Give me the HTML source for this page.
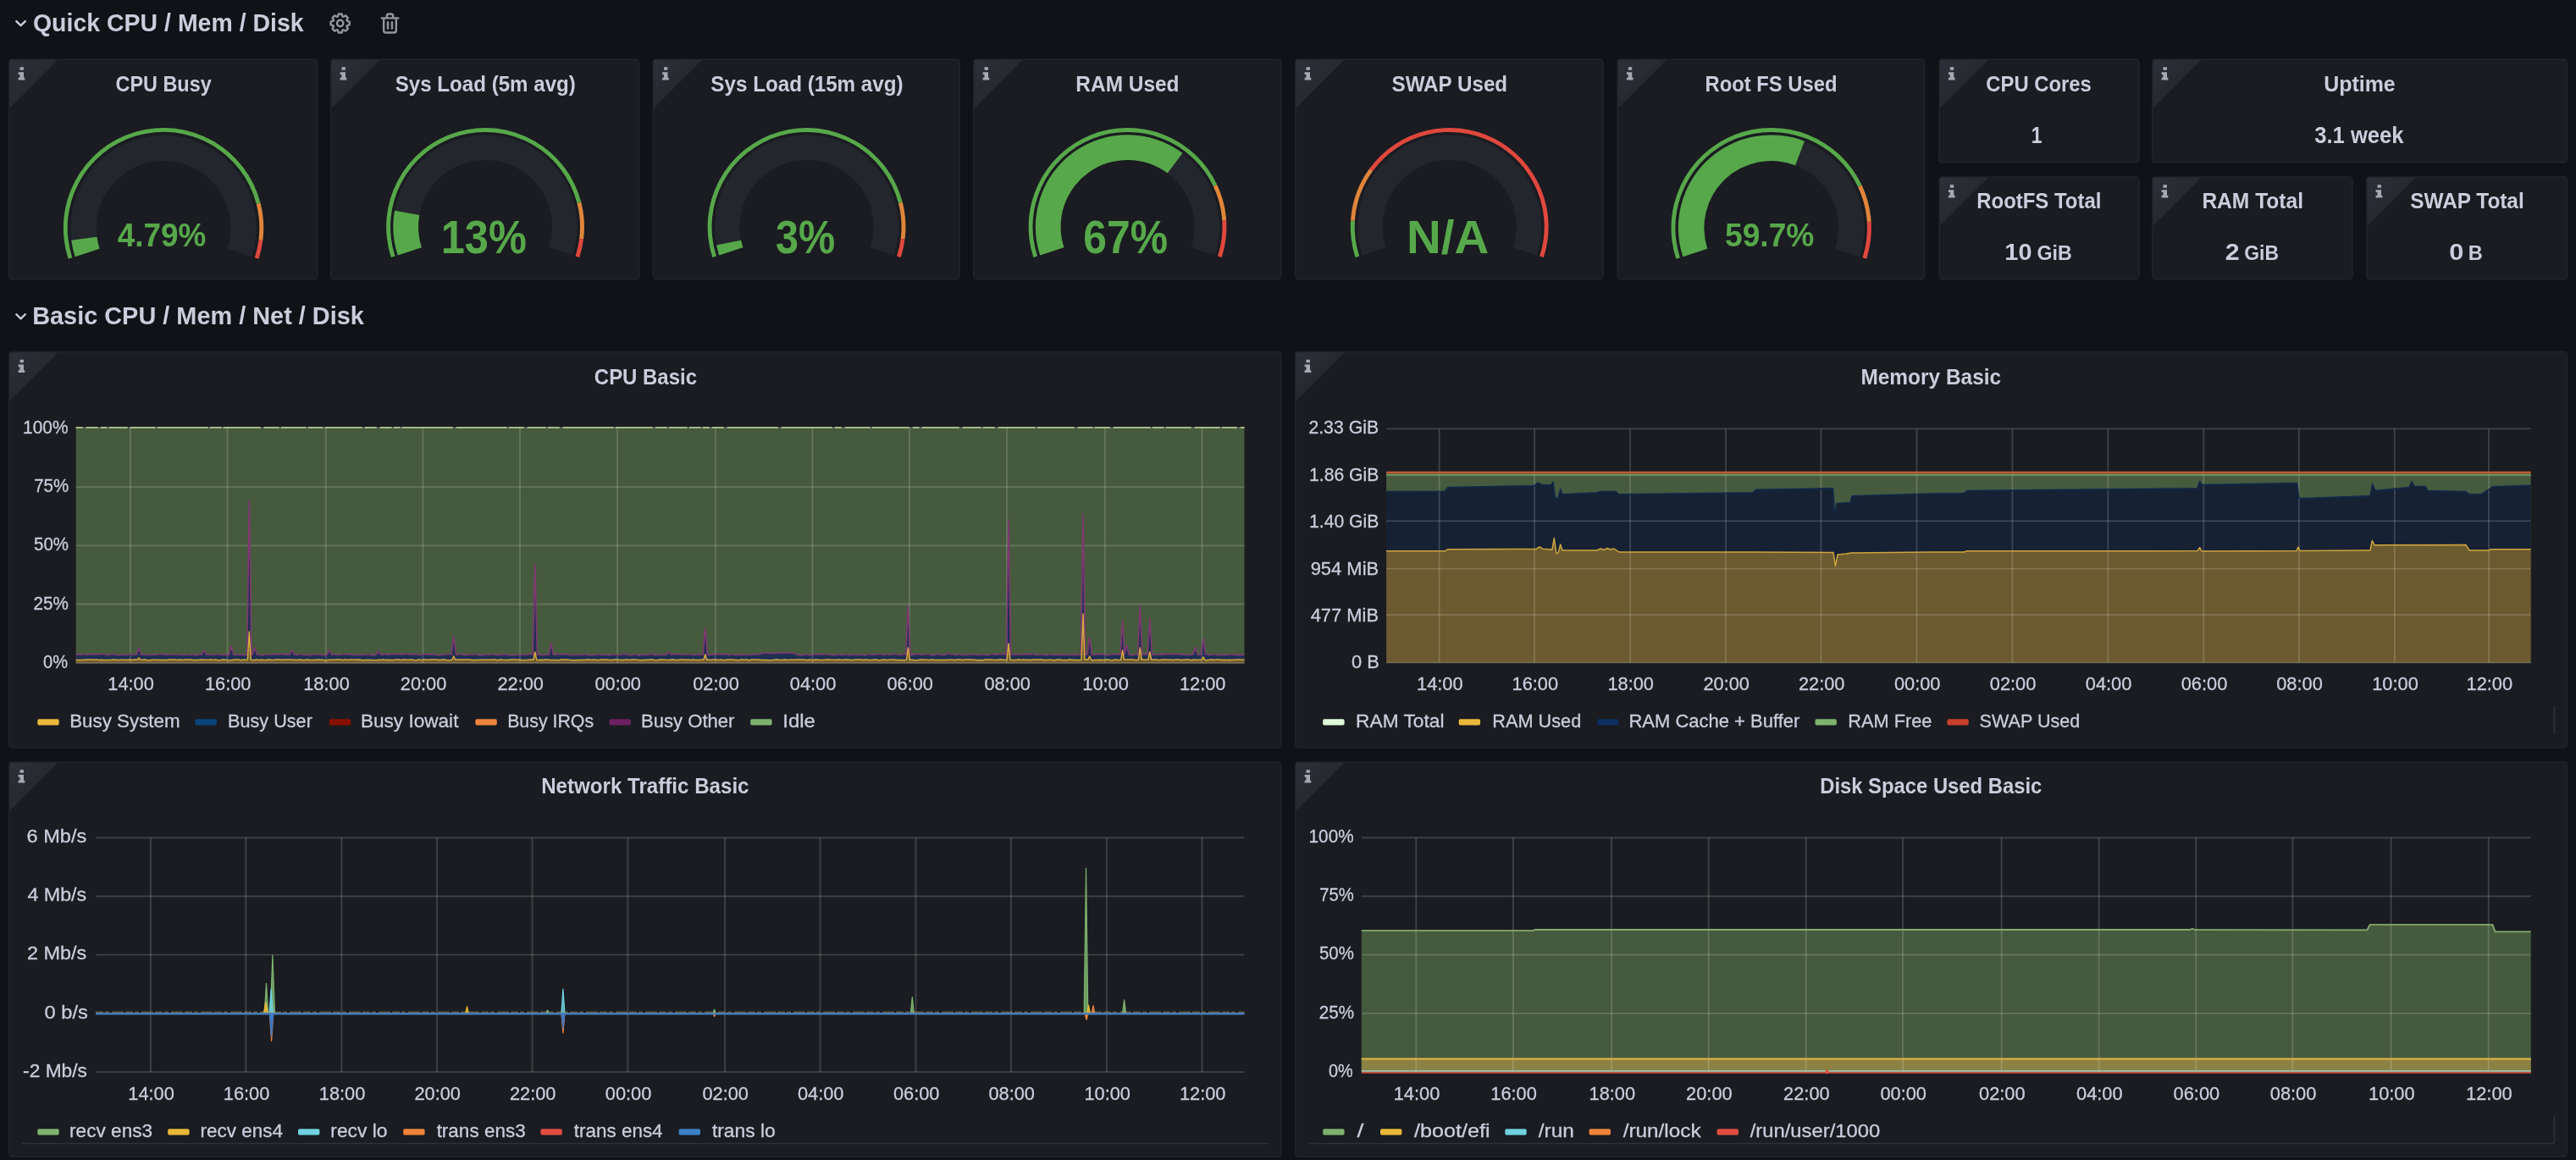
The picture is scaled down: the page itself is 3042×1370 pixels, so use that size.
<!DOCTYPE html>
<html><head><meta charset="utf-8"><title>Node Exporter Full</title>
<style>html,body{margin:0;padding:0;background:#111217;}body{width:3042px;height:1370px;overflow:hidden;font-family:"Liberation Sans",sans-serif;}svg{display:block}text{white-space:pre}</style>
</head><body>
<svg width="3042" height="1370" viewBox="0 0 3042 1370" font-family="Liberation Sans, sans-serif" style="will-change:transform">
<defs><linearGradient id="cg" x1="0" y1="0" x2="1" y2="1"><stop offset="0" stop-color="#2c3038"/><stop offset="0.5" stop-color="#262930"/></linearGradient></defs>
<rect width="3042" height="1370" fill="#111217"/>
<g transform="translate(9.9 13.0) scale(1.22)" fill="#ccccdc"><path d="M17,9.17a1,1,0,0,0-1.41,0L12,12.71,8.46,9.17a1,1,0,0,0-1.41,0,1,1,0,0,0,0,1.42l4.24,4.24a1,1,0,0,0,1.42,0L17,10.59A1,1,0,0,0,17,9.17Z"/></g>
<text x="38.91" y="37.0" font-size="30.2" font-weight="bold" textLength="319.81" lengthAdjust="spacingAndGlyphs" fill="#ccccdc">Quick CPU / Mem / Disk</text>
<g transform="translate(387 12.8) scale(1.225)" fill="#93949f"><path d="M21.32,9.55l-1.89-.63.89-1.78A1,1,0,0,0,20.13,6L18,3.87a1,1,0,0,0-1.15-.19l-1.78.89-.63-1.89A1,1,0,0,0,13.5,2h-3a1,1,0,0,0-.95.68L8.92,4.57,7.14,3.68A1,1,0,0,0,6,3.87L3.87,6a1,1,0,0,0-.19,1.15l.89,1.78-1.89.63A1,1,0,0,0,2,10.5v3a1,1,0,0,0,.68.95l1.89.63-.89,1.78A1,1,0,0,0,3.87,18L6,20.13a1,1,0,0,0,1.15.19l1.78-.89.63,1.89a1,1,0,0,0,.95.68h3a1,1,0,0,0,.95-.68l.63-1.89,1.78.89A1,1,0,0,0,18,20.13L20.13,18a1,1,0,0,0,.19-1.15l-.89-1.78,1.89-.63A1,1,0,0,0,22,13.5v-3A1,1,0,0,0,21.32,9.55ZM20,12.78l-1.2.4A2,2,0,0,0,17.64,16l.57,1.14-1.1,1.1L16,17.64a2,2,0,0,0-2.79,1.16l-.4,1.2H11.22l-.4-1.2A2,2,0,0,0,8,17.64l-1.14.57-1.1-1.1L6.36,16A2,2,0,0,0,5.2,13.18L4,12.78V11.22l1.2-.4A2,2,0,0,0,6.36,8L5.79,6.89l1.1-1.1L8,6.36A2,2,0,0,0,10.82,5.2l.4-1.2h1.56l.4,1.2A2,2,0,0,0,16,6.36l1.14-.57,1.1,1.1L17.64,8a2,2,0,0,0,1.16,2.79l1.2.4ZM12,8a4,4,0,1,0,4,4A4,4,0,0,0,12,8Zm0,6a2,2,0,1,1,2-2A2,2,0,0,1,12,14Z"/></g>
<g transform="translate(445.8 12.8) scale(1.225)" fill="#93949f"><path d="M10,18a1,1,0,0,0,1-1V11a1,1,0,0,0-2,0v6A1,1,0,0,0,10,18ZM20,6H16V5a3,3,0,0,0-3-3H11A3,3,0,0,0,8,5V6H4A1,1,0,0,0,4,8H5V19a3,3,0,0,0,3,3h8a3,3,0,0,0,3-3V8h1a1,1,0,0,0,0-2ZM10,5a1,1,0,0,1,1-1h2a1,1,0,0,1,1,1V6H10Zm7,14a1,1,0,0,1-1,1H8a1,1,0,0,1-1-1V8H17Zm-3-1a1,1,0,0,0,1-1V11a1,1,0,0,0-2,0v6A1,1,0,0,0,14,18Z"/></g>
<g transform="translate(9.9 359.2) scale(1.22)" fill="#ccccdc"><path d="M17,9.17a1,1,0,0,0-1.41,0L12,12.71,8.46,9.17a1,1,0,0,0-1.41,0,1,1,0,0,0,0,1.42l4.24,4.24a1,1,0,0,0,1.42,0L17,10.59A1,1,0,0,0,17,9.17Z"/></g>
<text x="38.16" y="382.6" font-size="30.2" font-weight="bold" textLength="391.70" lengthAdjust="spacingAndGlyphs" fill="#ccccdc">Basic CPU / Mem / Net / Disk</text>
<rect x="10.9" y="70.2" width="363.7" height="259.4" rx="3.6" fill="#1a1c21" stroke="#202227" stroke-width="1.8"/>
<path d="M11.5 70.8h57l-57 57z" fill="url(#cg)"/>
<path d="M23.5 79.3h4.4v3.5h-4.4zM21.6 85.2h6.4v6.6h1.3v2.7h-7.7v-2.7h1.8v-3.9h-1.8z" fill="#a6a8b2"/>
<text x="136.48" y="108.0" font-size="26.6" font-weight="bold" textLength="113.23" lengthAdjust="spacingAndGlyphs" fill="#ccccdc">CPU Busy</text>
<path d="M80.64 305.73A118.2 118.2 0 1 1 307.54 239.80L302.79 241.02A113.3 113.3 0 1 0 85.30 304.21Z" fill="#57a84a"/>
<path d="M307.54 239.80A118.2 118.2 0 0 1 310.32 284.01L305.46 283.40A113.3 113.3 0 0 0 302.79 241.02Z" fill="#e0853a"/>
<path d="M310.32 284.01A118.2 118.2 0 0 1 305.46 305.73L300.80 304.21A113.3 113.3 0 0 0 305.46 283.40Z" fill="#e0483e"/>
<path d="M88.62 303.13A109.8 109.8 0 1 1 297.48 303.13L268.47 293.71A79.3 79.3 0 1 0 117.63 293.71Z" fill="#23262c"/>
<path d="M88.62 303.13A109.8 109.8 0 0 1 84.23 283.82L114.46 279.76A79.3 79.3 0 0 0 117.63 293.71Z" fill="#57a84a"/>
<text x="138.72" y="290.7" font-size="39" font-weight="bold" textLength="104.76" lengthAdjust="spacingAndGlyphs" fill="#57a84a">4.79%</text>
<rect x="390.9" y="70.2" width="363.7" height="259.4" rx="3.6" fill="#1a1c21" stroke="#202227" stroke-width="1.8"/>
<path d="M391.5 70.8h57l-57 57z" fill="url(#cg)"/>
<path d="M403.5 79.3h4.4v3.5h-4.4zM401.6 85.2h6.4v6.6h1.3v2.7h-7.7v-2.7h1.8v-3.9h-1.8z" fill="#a6a8b2"/>
<text x="466.77" y="108.0" font-size="26.6" font-weight="bold" textLength="213.03" lengthAdjust="spacingAndGlyphs" fill="#ccccdc">Sys Load (5m avg)</text>
<path d="M461.87 304.02A116.9 116.9 0 1 1 686.28 238.83L681.53 240.05A112.0 112.0 0 1 0 466.53 302.51Z" fill="#57a84a"/>
<path d="M686.28 238.83A116.9 116.9 0 0 1 689.03 282.55L684.17 281.94A112.0 112.0 0 0 0 681.53 240.05Z" fill="#e0853a"/>
<path d="M689.03 282.55A116.9 116.9 0 0 1 684.23 304.02L679.57 302.51A112.0 112.0 0 0 0 684.17 281.94Z" fill="#e0483e"/>
<path d="M469.67 301.49A108.7 108.7 0 1 1 676.43 301.49L648.18 292.31A79.0 79.0 0 1 0 497.92 292.31Z" fill="#23262c"/>
<path d="M469.67 301.49A108.7 108.7 0 0 1 466.03 248.87L495.27 254.07A79.0 79.0 0 0 0 497.92 292.31Z" fill="#57a84a"/>
<text x="520.76" y="299.0" font-size="55" font-weight="bold" textLength="101.01" lengthAdjust="spacingAndGlyphs" fill="#57a84a">13%</text>
<rect x="771.4" y="70.2" width="361.7" height="259.4" rx="3.6" fill="#1a1c21" stroke="#202227" stroke-width="1.8"/>
<path d="M772.0 70.8h57l-57 57z" fill="url(#cg)"/>
<path d="M784.0 79.3h4.4v3.5h-4.4zM782.1 85.2h6.4v6.6h1.3v2.7h-7.7v-2.7h1.8v-3.9h-1.8z" fill="#a6a8b2"/>
<text x="839.37" y="108.0" font-size="26.6" font-weight="bold" textLength="227.22" lengthAdjust="spacingAndGlyphs" fill="#ccccdc">Sys Load (15m avg)</text>
<path d="M841.37 304.02A116.9 116.9 0 1 1 1065.78 238.83L1061.03 240.05A112.0 112.0 0 1 0 846.03 302.51Z" fill="#57a84a"/>
<path d="M1065.78 238.83A116.9 116.9 0 0 1 1068.53 282.55L1063.67 281.94A112.0 112.0 0 0 0 1061.03 240.05Z" fill="#e0853a"/>
<path d="M1068.53 282.55A116.9 116.9 0 0 1 1063.73 304.02L1059.07 302.51A112.0 112.0 0 0 0 1063.67 281.94Z" fill="#e0483e"/>
<path d="M849.17 301.49A108.7 108.7 0 1 1 1055.93 301.49L1027.68 292.31A79.0 79.0 0 1 0 877.42 292.31Z" fill="#23262c"/>
<path d="M849.17 301.49A108.7 108.7 0 0 1 846.04 289.61L875.14 283.68A79.0 79.0 0 0 0 877.42 292.31Z" fill="#57a84a"/>
<text x="915.96" y="298.7" font-size="55" font-weight="bold" textLength="70.08" lengthAdjust="spacingAndGlyphs" fill="#57a84a">3%</text>
<rect x="1149.9" y="70.2" width="362.7" height="259.4" rx="3.6" fill="#1a1c21" stroke="#202227" stroke-width="1.8"/>
<path d="M1150.5 70.8h57l-57 57z" fill="url(#cg)"/>
<path d="M1162.5 79.3h4.4v3.5h-4.4zM1160.6 85.2h6.4v6.6h1.3v2.7h-7.7v-2.7h1.8v-3.9h-1.8z" fill="#a6a8b2"/>
<text x="1270.37" y="108.0" font-size="26.6" font-weight="bold" textLength="122.16" lengthAdjust="spacingAndGlyphs" fill="#ccccdc">RAM Used</text>
<path d="M1220.37 304.02A116.9 116.9 0 0 1 1437.32 218.13L1432.89 220.21A112.0 112.0 0 0 0 1225.03 302.51Z" fill="#57a84a"/>
<path d="M1437.32 218.13A116.9 116.9 0 0 1 1448.22 260.56L1443.33 260.87A112.0 112.0 0 0 0 1432.89 220.21Z" fill="#e0853a"/>
<path d="M1448.22 260.56A116.9 116.9 0 0 1 1442.73 304.02L1438.07 302.51A112.0 112.0 0 0 0 1443.33 260.87Z" fill="#e0483e"/>
<path d="M1228.17 301.49A108.7 108.7 0 1 1 1434.93 301.49L1406.68 292.31A79.0 79.0 0 1 0 1256.42 292.31Z" fill="#23262c"/>
<path d="M1228.17 301.49A108.7 108.7 0 0 1 1396.54 180.77L1378.78 204.58A79.0 79.0 0 0 0 1256.42 292.31Z" fill="#57a84a"/>
<text x="1279.27" y="298.7" font-size="55" font-weight="bold" textLength="99.68" lengthAdjust="spacingAndGlyphs" fill="#57a84a">67%</text>
<rect x="1529.9" y="70.2" width="363.0" height="259.4" rx="3.6" fill="#1a1c21" stroke="#202227" stroke-width="1.8"/>
<path d="M1530.5 70.8h57l-57 57z" fill="url(#cg)"/>
<path d="M1542.5 79.3h4.4v3.5h-4.4zM1540.6 85.2h6.4v6.6h1.3v2.7h-7.7v-2.7h1.8v-3.9h-1.8z" fill="#a6a8b2"/>
<text x="1643.52" y="108.0" font-size="26.6" font-weight="bold" textLength="136.60" lengthAdjust="spacingAndGlyphs" fill="#ccccdc">SWAP Used</text>
<path d="M1600.52 304.02A116.9 116.9 0 0 1 1595.03 260.56L1599.92 260.87A112.0 112.0 0 0 0 1605.18 302.51Z" fill="#57a84a"/>
<path d="M1595.03 260.56A116.9 116.9 0 0 1 1617.13 199.19L1621.09 202.07A112.0 112.0 0 0 0 1599.92 260.87Z" fill="#e0853a"/>
<path d="M1617.13 199.19A116.9 116.9 0 0 1 1822.88 304.02L1818.22 302.51A112.0 112.0 0 0 0 1621.09 202.07Z" fill="#e0483e"/>
<path d="M1608.32 301.49A108.7 108.7 0 1 1 1815.08 301.49L1786.83 292.31A79.0 79.0 0 1 0 1636.57 292.31Z" fill="#23262c"/>
<text x="1661.00" y="299.0" font-size="55" font-weight="bold" textLength="97.26" lengthAdjust="spacingAndGlyphs" fill="#57a84a">N/A</text>
<rect x="1910.2" y="70.2" width="362.4" height="259.4" rx="3.6" fill="#1a1c21" stroke="#202227" stroke-width="1.8"/>
<path d="M1910.8 70.8h57l-57 57z" fill="url(#cg)"/>
<path d="M1922.8 79.3h4.4v3.5h-4.4zM1920.9 85.2h6.4v6.6h1.3v2.7h-7.7v-2.7h1.8v-3.9h-1.8z" fill="#a6a8b2"/>
<text x="2013.61" y="108.0" font-size="26.6" font-weight="bold" textLength="155.81" lengthAdjust="spacingAndGlyphs" fill="#ccccdc">Root FS Used</text>
<path d="M1979.29 305.73A118.2 118.2 0 0 1 2198.65 218.87L2194.22 220.96A113.3 113.3 0 0 0 1983.95 304.21Z" fill="#57a84a"/>
<path d="M2198.65 218.87A118.2 118.2 0 0 1 2209.67 261.78L2204.78 262.09A113.3 113.3 0 0 0 2194.22 220.96Z" fill="#e0853a"/>
<path d="M2209.67 261.78A118.2 118.2 0 0 1 2204.11 305.73L2199.45 304.21A113.3 113.3 0 0 0 2204.78 262.09Z" fill="#e0483e"/>
<path d="M1987.27 303.13A109.8 109.8 0 1 1 2196.13 303.13L2167.12 293.71A79.3 79.3 0 1 0 2016.28 293.71Z" fill="#23262c"/>
<path d="M1987.27 303.13A109.8 109.8 0 0 1 2130.96 166.66L2120.06 195.14A79.3 79.3 0 0 0 2016.28 293.71Z" fill="#57a84a"/>
<text x="2037.00" y="290.7" font-size="39" font-weight="bold" textLength="105.45" lengthAdjust="spacingAndGlyphs" fill="#57a84a">59.7%</text>
<rect x="2290.2" y="70.2" width="235.7" height="121.6" rx="3.6" fill="#1a1c21" stroke="#202227" stroke-width="1.8"/>
<path d="M2290.8 70.8h57l-57 57z" fill="url(#cg)"/>
<path d="M2302.8 79.3h4.4v3.5h-4.4zM2300.9 85.2h6.4v6.6h1.3v2.7h-7.7v-2.7h1.8v-3.9h-1.8z" fill="#a6a8b2"/>
<text x="2345.35" y="108.0" font-size="26.6" font-weight="bold" textLength="124.40" lengthAdjust="spacingAndGlyphs" fill="#ccccdc">CPU Cores</text>
<text x="2398.83" y="168.8" font-size="28.2" font-weight="bold" textLength="12.66" lengthAdjust="spacingAndGlyphs" fill="#ccccdc">1</text>
<rect x="2541.9" y="70.2" width="489.4" height="121.6" rx="3.6" fill="#1a1c21" stroke="#202227" stroke-width="1.8"/>
<path d="M2542.5 70.8h57l-57 57z" fill="url(#cg)"/>
<path d="M2554.5 79.3h4.4v3.5h-4.4zM2552.6 85.2h6.4v6.6h1.3v2.7h-7.7v-2.7h1.8v-3.9h-1.8z" fill="#a6a8b2"/>
<text x="2744.24" y="108.0" font-size="26.6" font-weight="bold" textLength="84.51" lengthAdjust="spacingAndGlyphs" fill="#ccccdc">Uptime</text>
<text x="2733.17" y="168.8" font-size="28.2" font-weight="bold" textLength="105.42" lengthAdjust="spacingAndGlyphs" fill="#ccccdc">3.1 week</text>
<rect x="2290.2" y="209.2" width="235.7" height="120.5" rx="3.6" fill="#1a1c21" stroke="#202227" stroke-width="1.8"/>
<path d="M2290.8 209.8h57l-57 57z" fill="url(#cg)"/>
<path d="M2302.8 218.3h4.4v3.5h-4.4zM2300.9 224.2h6.4v6.6h1.3v2.7h-7.7v-2.7h1.8v-3.9h-1.8z" fill="#a6a8b2"/>
<text x="2334.24" y="246.2" font-size="26.6" font-weight="bold" textLength="147.17" lengthAdjust="spacingAndGlyphs" fill="#ccccdc">RootFS Total</text>
<text x="2367.35" y="306.5" font-size="28.2" font-weight="bold" textLength="32.20" lengthAdjust="spacingAndGlyphs" fill="#ccccdc">10</text>
<text x="2405.45" y="306.5" font-size="24.6" font-weight="bold" textLength="41.23" lengthAdjust="spacingAndGlyphs" fill="#ccccdc">GiB</text>
<rect x="2541.9" y="209.2" width="235.9" height="120.5" rx="3.6" fill="#1a1c21" stroke="#202227" stroke-width="1.8"/>
<path d="M2542.5 209.8h57l-57 57z" fill="url(#cg)"/>
<path d="M2554.5 218.3h4.4v3.5h-4.4zM2552.6 224.2h6.4v6.6h1.3v2.7h-7.7v-2.7h1.8v-3.9h-1.8z" fill="#a6a8b2"/>
<text x="2600.39" y="246.2" font-size="26.6" font-weight="bold" textLength="119.60" lengthAdjust="spacingAndGlyphs" fill="#ccccdc">RAM Total</text>
<text x="2627.79" y="306.5" font-size="28.2" font-weight="bold" textLength="16.93" lengthAdjust="spacingAndGlyphs" fill="#ccccdc">2</text>
<text x="2650.26" y="306.5" font-size="24.6" font-weight="bold" textLength="40.74" lengthAdjust="spacingAndGlyphs" fill="#ccccdc">GiB</text>
<rect x="2794.9" y="209.2" width="236.4" height="120.5" rx="3.6" fill="#1a1c21" stroke="#202227" stroke-width="1.8"/>
<path d="M2795.5 209.8h57l-57 57z" fill="url(#cg)"/>
<path d="M2807.5 218.3h4.4v3.5h-4.4zM2805.6 224.2h6.4v6.6h1.3v2.7h-7.7v-2.7h1.8v-3.9h-1.8z" fill="#a6a8b2"/>
<text x="2846.25" y="246.2" font-size="26.6" font-weight="bold" textLength="134.44" lengthAdjust="spacingAndGlyphs" fill="#ccccdc">SWAP Total</text>
<text x="2892.27" y="306.5" font-size="28.2" font-weight="bold" textLength="17.16" lengthAdjust="spacingAndGlyphs" fill="#ccccdc">0</text>
<text x="2914.72" y="306.5" font-size="24.6" font-weight="bold" textLength="16.99" lengthAdjust="spacingAndGlyphs" fill="#ccccdc">B</text>
<rect x="10.9" y="415.6" width="1501.7" height="467.3" rx="3.6" fill="#1a1c21" stroke="#202227" stroke-width="1.8"/>
<path d="M11.5 416.2h57l-57 57z" fill="url(#cg)"/>
<path d="M23.5 424.7h4.4v3.5h-4.4zM21.6 430.6h6.4v6.6h1.3v2.7h-7.7v-2.7h1.8v-3.9h-1.8z" fill="#a6a8b2"/>
<text x="701.84" y="453.8" font-size="26.6" font-weight="bold" textLength="121.17" lengthAdjust="spacingAndGlyphs" fill="#ccccdc">CPU Basic</text>
<rect x="89.7" y="505" width="1379.8" height="278.2" fill="#465a3e"/>
<path d="M89.7 772.9L92.7 772.6L95.7 773.3L98.7 772.5L101.7 773.2L104.7 772.9L107.7 772.5L110.7 773.1L113.7 772.5L116.7 773.0L119.7 772.5L122.7 772.5L125.7 773.0L128.7 773.6L131.7 772.6L134.7 772.7L137.7 773.3L140.7 773.7L143.7 773.2L146.7 773.0L149.7 773.8L152.7 772.5L155.7 773.6L158.7 772.8L161.4 773.1L164.0 765.0L166.6 773.1L167.7 772.8L170.7 773.5L173.7 772.7L176.7 773.2L179.7 773.3L182.7 772.9L185.7 773.2L188.7 772.5L191.7 772.5L194.7 772.7L197.7 773.4L200.7 773.0L203.7 772.8L206.7 773.2L209.7 773.0L212.7 772.8L215.7 773.5L218.7 773.4L221.7 772.7L224.7 773.2L227.7 773.1L230.7 773.6L233.7 773.4L236.7 772.8L238.4 773.1L241.0 768.0L243.6 773.1L245.7 773.0L248.7 773.5L251.7 772.6L254.7 773.1L257.7 772.5L260.7 773.3L263.7 773.5L266.7 773.2L269.7 773.6L270.4 773.1L273.0 763.0L275.6 773.1L278.7 773.2L281.7 773.2L284.7 773.0L287.7 773.6L290.7 773.7L291.7 773.1L294.3 590.8L296.9 773.1L298.2 773.1L300.8 765.0L303.4 773.1L305.7 773.3L308.7 773.8L311.7 773.6L314.7 772.8L317.7 772.9L320.7 773.3L323.7 772.4L326.7 773.0L329.7 772.6L332.7 772.6L335.7 772.5L338.7 773.5L341.7 772.6L342.4 773.1L345.0 768.0L347.6 773.1L350.7 773.6L353.7 772.5L356.7 773.0L359.7 773.2L362.7 773.6L365.7 773.5L368.7 773.6L371.7 772.8L374.7 773.0L377.7 772.9L380.7 773.6L383.7 773.7L386.4 773.1L389.0 768.0L391.6 773.1L392.7 772.7L395.7 772.7L398.7 773.1L401.7 773.2L404.7 772.8L407.7 772.4L410.7 773.0L413.7 772.9L416.7 773.2L419.7 773.7L422.7 773.4L425.7 773.1L428.7 773.3L431.7 773.3L434.7 772.5L437.7 773.7L440.7 773.5L443.7 773.6L444.4 773.1L447.0 769.0L449.6 773.1L452.7 773.0L455.7 772.5L458.7 773.3L461.7 772.5L464.7 772.5L467.7 772.7L470.7 772.6L473.7 772.9L476.7 772.5L479.7 772.4L482.7 772.6L485.7 772.5L488.7 772.9L491.7 772.4L494.7 773.6L497.7 773.3L500.7 772.6L503.7 772.8L506.7 772.9L509.7 772.9L512.7 772.6L515.7 773.6L518.7 773.8L521.7 773.1L524.7 773.1L527.7 772.5L530.7 772.5L533.2 773.1L535.8 751.0L538.4 773.1L539.7 773.6L542.7 772.6L545.7 772.4L548.7 773.7L551.7 773.1L554.7 772.6L557.7 773.2L560.7 772.4L563.7 773.1L566.7 773.8L569.7 773.6L572.7 773.4L575.7 772.8L578.7 772.9L581.7 772.6L584.7 773.5L587.7 773.1L590.7 773.5L593.7 772.9L596.7 772.7L599.7 773.5L602.7 773.8L605.7 773.6L608.7 773.5L611.7 773.5L614.7 773.4L617.7 772.7L620.7 773.1L623.7 772.9L626.7 772.4L629.2 773.1L631.8 666.5L634.4 773.1L635.7 772.8L638.7 773.4L641.7 773.7L644.7 773.0L648.2 773.1L650.8 759.6L653.4 773.1L656.7 772.9L659.7 772.7L662.7 772.7L665.7 772.7L668.7 772.7L671.7 773.3L674.7 773.7L677.7 773.6L680.7 773.1L683.7 773.3L686.7 773.5L689.7 772.5L692.7 773.3L695.7 773.7L698.7 773.5L701.7 773.5L704.7 773.1L707.7 772.6L710.7 773.5L713.7 772.9L716.7 773.5L719.7 773.8L722.7 773.0L725.7 773.0L728.7 773.7L731.7 773.4L734.7 772.6L737.7 772.6L740.7 772.6L743.7 773.7L746.7 773.5L749.7 772.6L752.7 773.6L755.7 773.8L758.7 773.3L761.7 772.9L764.7 773.2L767.7 772.6L770.7 772.4L773.7 773.8L776.7 773.3L779.7 773.1L782.7 773.7L785.7 773.0L787.4 773.1L790.0 770.0L792.6 773.1L794.7 772.7L797.7 772.8L800.7 772.8L803.7 772.7L806.7 773.2L809.7 772.8L812.7 773.0L815.7 772.6L818.7 773.7L821.7 772.9L824.7 773.0L827.7 773.2L830.2 773.1L832.8 742.0L835.4 773.1L836.7 773.7L839.7 773.1L842.7 773.1L845.7 773.1L848.7 772.4L851.7 773.0L854.7 772.7L857.7 772.4L860.7 773.5L863.7 772.6L866.7 773.1L869.7 773.4L872.7 773.2L875.7 772.9L878.7 773.1L881.7 773.2L884.7 773.5L887.7 772.5L890.7 773.2L893.7 772.7L896.7 772.8L899.7 771.6L902.7 771.2L905.7 771.3L908.7 771.6L911.7 771.8L914.7 771.1L917.7 771.4L920.7 771.2L923.7 771.2L926.7 771.5L929.7 771.1L932.7 771.2L935.7 771.2L938.7 771.8L941.7 773.4L944.7 773.6L947.7 773.7L950.7 772.8L953.7 773.2L956.7 773.7L959.7 773.6L962.7 772.6L965.7 772.6L968.7 773.0L971.7 772.5L974.7 772.7L977.7 772.5L980.7 773.3L983.7 773.5L986.7 773.7L989.7 772.6L992.7 773.4L995.7 773.3L998.7 772.6L1001.7 773.6L1004.7 773.8L1007.7 772.7L1010.7 773.7L1013.7 773.0L1016.7 773.1L1019.7 773.8L1022.7 773.6L1025.7 772.6L1028.7 773.0L1031.7 773.1L1034.7 772.9L1037.7 772.7L1040.7 772.8L1043.7 773.4L1046.7 772.4L1049.7 773.2L1052.7 773.0L1055.7 772.4L1058.7 772.9L1061.7 773.3L1064.7 773.1L1067.7 772.5L1069.8 773.1L1072.4 716.0L1075.0 773.1L1076.7 773.8L1079.7 772.5L1082.7 772.8L1085.7 772.5L1088.7 773.5L1091.7 772.8L1094.7 772.6L1097.7 773.0L1100.7 773.7L1103.7 773.5L1106.7 772.8L1109.7 772.6L1112.7 773.7L1115.7 773.2L1117.4 773.1L1120.0 771.0L1122.6 773.1L1124.7 772.5L1127.7 773.4L1130.7 773.0L1133.7 772.5L1136.7 773.7L1139.7 773.3L1142.7 773.5L1145.7 772.5L1148.7 773.6L1151.7 772.5L1154.7 773.6L1157.7 773.0L1160.7 772.9L1163.7 773.2L1166.7 773.7L1169.7 772.8L1172.7 772.6L1175.7 773.1L1178.7 772.7L1181.7 772.6L1184.7 772.6L1187.7 772.5L1188.4 773.1L1191.0 614.0L1193.6 773.1L1196.7 772.8L1199.7 773.5L1202.7 772.8L1205.7 773.1L1208.7 772.6L1211.7 772.9L1214.7 772.4L1217.7 772.8L1220.7 772.4L1223.7 773.4L1226.7 773.2L1229.7 772.7L1232.7 773.1L1235.7 773.7L1238.7 772.5L1241.7 773.5L1244.7 773.0L1247.7 773.1L1250.7 773.6L1253.7 773.0L1256.7 773.1L1259.7 773.4L1262.7 773.8L1265.7 772.9L1268.7 773.6L1271.7 773.4L1274.7 773.3L1276.4 773.1L1279.0 606.5L1281.6 773.1L1284.1 773.1L1286.7 752.6L1289.3 773.1L1292.7 773.4L1295.7 772.8L1298.7 772.6L1301.7 772.5L1304.7 773.6L1307.7 773.6L1310.7 773.3L1313.7 772.8L1316.7 772.7L1319.7 772.8L1323.0 773.1L1325.6 733.5L1327.9 773.1L1330.5 761.7L1333.1 773.1L1334.7 773.7L1337.7 773.8L1340.7 773.2L1343.7 773.1L1346.3 716.0L1348.9 773.1L1349.7 772.8L1352.7 772.9L1355.2 773.1L1357.8 730.6L1360.4 773.1L1361.7 773.1L1364.7 773.1L1367.7 772.7L1370.7 773.1L1373.7 772.4L1376.7 772.8L1379.7 772.5L1382.7 773.0L1385.7 772.5L1388.7 772.4L1391.7 772.8L1394.7 772.7L1397.7 773.2L1400.7 773.1L1403.7 773.5L1406.7 773.3L1409.0 773.1L1411.6 764.6L1414.2 773.1L1415.7 772.9L1418.4 773.1L1421.0 754.6L1423.6 773.1L1424.7 772.6L1427.7 773.4L1430.7 773.3L1433.7 772.5L1436.7 773.6L1439.7 773.6L1442.7 773.3L1445.7 773.4L1448.7 773.5L1451.7 772.6L1454.7 773.1L1457.7 773.1L1460.7 773.6L1463.7 773.5L1466.7 773.6L1469.5 773.1L1469.5 783.2L89.7 783.2Z" fill="#1f2f52"/>
<path d="M89.7 779.4L92.7 779.6L95.7 779.4L98.7 779.5L101.7 779.1L104.7 778.9L107.7 779.0L110.7 779.2L113.7 779.0L116.7 779.6L119.7 779.3L122.7 779.4L125.7 779.4L128.7 779.4L131.7 779.3L134.7 778.9L137.7 779.5L140.7 779.5L143.7 779.3L146.7 779.3L149.7 779.4L152.7 779.0L155.7 779.5L158.7 779.1L162.1 779.3L164.0 777.0L165.9 779.3L167.7 779.5L170.7 779.1L173.7 779.5L176.7 779.7L179.7 779.3L182.7 779.2L185.7 779.3L188.7 779.4L191.7 779.5L194.7 779.4L197.7 779.4L200.7 779.0L203.7 779.0L206.7 779.1L209.7 779.5L212.7 779.1L215.7 779.4L218.7 778.9L221.7 778.9L224.7 779.1L227.7 779.4L230.7 779.5L233.7 779.4L236.7 779.1L239.7 779.3L242.7 779.3L245.7 779.3L248.7 779.0L251.7 779.6L254.7 779.1L257.7 779.7L260.7 779.6L263.7 778.9L266.7 779.3L269.7 779.6L272.7 779.7L275.7 779.3L278.7 779.1L281.7 779.1L284.7 779.7L287.7 779.1L290.7 779.4L292.4 779.3L294.3 746.0L296.2 779.3L299.7 779.7L302.7 779.0L305.7 779.6L308.7 779.3L311.7 779.6L314.7 779.5L317.7 779.1L320.7 779.6L323.7 779.3L326.7 778.9L329.7 778.9L332.7 779.3L335.7 779.3L338.7 779.1L341.7 779.0L344.7 779.2L347.7 779.2L350.7 779.6L353.7 778.9L356.7 779.5L359.7 779.6L362.7 779.0L365.7 779.6L368.7 779.5L371.7 779.6L374.7 779.1L377.7 779.2L380.7 779.2L383.7 779.7L386.7 779.4L389.7 779.2L392.7 779.2L395.7 779.1L398.7 778.9L401.7 779.0L404.7 779.6L407.7 779.1L410.7 779.6L413.7 779.1L416.7 779.1L419.7 779.3L422.7 779.1L425.7 779.2L428.7 779.7L431.7 779.6L434.7 779.5L437.7 779.4L440.7 779.6L443.7 779.7L446.7 779.3L449.7 779.5L452.7 778.9L455.7 779.5L458.7 779.3L461.7 779.5L464.7 779.4L467.7 779.1L470.7 778.9L473.7 779.6L476.7 779.0L479.7 779.3L482.7 779.2L485.7 779.1L488.7 779.5L491.7 779.7L494.7 779.1L497.7 779.4L500.7 779.1L503.7 779.3L506.7 779.2L509.7 779.0L512.7 779.0L515.7 779.1L518.7 779.6L521.7 779.3L524.7 779.1L527.7 779.6L530.7 779.7L533.9 779.3L535.8 775.0L537.7 779.3L539.7 779.1L542.7 779.0L545.7 779.2L548.7 779.0L551.7 779.1L554.7 779.1L557.7 779.4L560.7 779.6L563.7 779.5L566.7 779.2L569.7 779.2L572.7 779.3L575.7 779.2L578.7 779.2L581.7 778.9L584.7 779.1L587.7 779.7L590.7 779.0L593.7 779.3L596.7 779.4L599.7 779.6L602.7 779.1L605.7 779.1L608.7 779.1L611.7 779.2L614.7 779.3L617.7 779.7L620.7 779.6L623.7 779.6L626.7 778.9L629.9 779.3L631.8 770.0L633.7 779.3L635.7 779.6L638.7 779.3L641.7 779.4L644.7 778.9L647.7 779.2L650.7 779.6L653.7 779.6L656.7 779.6L659.7 779.7L662.7 779.1L665.7 779.0L668.7 779.0L671.7 779.3L674.7 779.4L677.7 779.7L680.7 779.5L683.7 779.4L686.7 779.5L689.7 779.3L692.7 779.3L695.7 778.9L698.7 779.5L701.7 779.1L704.7 779.6L707.7 779.4L710.7 779.1L713.7 779.0L716.7 779.1L719.7 779.4L722.7 779.5L725.7 779.0L728.7 779.0L731.7 779.3L734.7 779.4L737.7 779.2L740.7 779.1L743.7 779.4L746.7 778.9L749.7 779.1L752.7 779.3L755.7 779.7L758.7 779.4L761.7 779.6L764.7 779.3L767.7 779.1L770.7 779.1L773.7 779.7L776.7 779.5L779.7 779.1L782.7 778.9L785.7 779.3L788.7 779.4L791.7 779.2L794.7 779.1L797.7 779.4L800.7 779.6L803.7 779.1L806.7 778.9L809.7 779.2L812.7 779.2L815.7 779.4L818.7 779.1L821.7 779.5L824.7 779.5L827.7 779.3L830.9 779.3L832.8 773.0L834.7 779.3L836.7 779.1L839.7 779.6L842.7 779.1L845.7 779.1L848.7 779.5L851.7 779.1L854.7 779.7L857.7 779.3L860.7 779.0L863.7 779.1L866.7 779.2L869.7 779.4L872.7 779.7L875.7 779.0L878.7 779.2L881.7 779.1L884.7 779.7L887.7 779.0L890.7 778.9L893.7 778.9L896.7 779.2L899.7 779.6L902.7 779.6L905.7 779.5L908.7 779.7L911.7 779.6L914.7 779.2L917.7 779.0L920.7 779.6L923.7 779.5L926.7 778.9L929.7 779.4L932.7 779.2L935.7 779.2L938.7 779.2L941.7 779.0L944.7 778.9L947.7 779.1L950.7 779.2L953.7 779.7L956.7 779.0L959.7 779.7L962.7 779.1L965.7 779.2L968.7 779.6L971.7 779.6L974.7 779.2L977.7 778.9L980.7 779.3L983.7 779.2L986.7 779.6L989.7 779.1L992.7 779.2L995.7 779.6L998.7 778.9L1001.7 779.2L1004.7 779.5L1007.7 779.5L1010.7 778.9L1013.7 778.9L1016.7 779.0L1019.7 779.6L1022.7 779.1L1025.7 779.5L1028.7 779.6L1031.7 779.2L1034.7 779.1L1037.7 779.7L1040.7 779.4L1043.7 779.1L1046.7 779.5L1049.7 779.2L1052.7 779.1L1055.7 778.9L1058.7 779.5L1061.7 779.6L1064.7 779.4L1067.7 779.7L1070.5 779.3L1072.4 765.0L1074.3 779.3L1076.7 779.3L1079.7 779.7L1082.7 779.7L1085.7 779.2L1088.7 779.1L1091.7 779.2L1094.7 779.3L1097.7 779.6L1100.7 779.0L1103.7 779.5L1106.7 779.5L1109.7 779.6L1112.7 779.5L1115.7 779.4L1118.7 779.2L1121.7 779.2L1124.7 779.2L1127.7 779.5L1130.7 779.0L1133.7 779.1L1136.7 779.5L1139.7 779.1L1142.7 779.0L1145.7 778.9L1148.7 779.3L1151.7 779.2L1154.7 779.7L1157.7 779.6L1160.7 779.7L1163.7 779.1L1166.7 779.0L1169.7 779.0L1172.7 779.3L1175.7 779.5L1178.7 779.3L1181.7 779.1L1184.7 779.2L1187.7 779.4L1189.1 779.3L1191.0 760.0L1192.9 779.3L1193.7 779.5L1196.7 779.6L1199.7 779.4L1202.7 779.0L1205.7 779.6L1208.7 779.1L1211.7 779.4L1214.7 779.2L1217.7 779.5L1220.7 779.1L1223.7 779.1L1226.7 779.1L1229.7 779.0L1232.7 779.6L1235.7 779.4L1238.7 779.2L1241.7 779.2L1244.7 779.7L1247.7 779.3L1250.7 779.1L1253.7 779.5L1256.7 779.4L1259.7 779.7L1262.7 779.0L1265.7 779.3L1268.7 779.6L1271.7 779.6L1274.7 779.6L1277.1 779.3L1279.0 725.0L1280.9 779.3L1283.7 779.0L1284.8 779.3L1286.7 775.0L1288.6 779.3L1289.7 779.7L1292.7 779.4L1295.7 779.6L1298.7 779.2L1301.7 779.6L1304.7 779.3L1307.7 779.1L1310.7 779.5L1313.7 779.7L1316.7 779.0L1319.7 779.4L1322.7 779.4L1323.7 779.3L1325.6 768.0L1327.5 779.3L1328.7 779.2L1331.7 779.0L1334.7 779.1L1337.7 779.1L1340.7 779.4L1343.7 779.4L1344.4 779.3L1346.3 765.0L1348.2 779.3L1349.7 778.9L1352.7 779.2L1355.9 779.3L1357.8 770.0L1359.7 779.3L1361.7 779.1L1364.7 779.1L1367.7 779.5L1370.7 779.3L1373.7 779.0L1376.7 779.0L1379.7 779.2L1382.7 779.3L1385.7 779.4L1388.7 779.0L1391.7 779.0L1394.7 779.5L1397.7 779.2L1400.7 779.1L1403.7 779.1L1406.7 779.7L1409.7 779.1L1412.7 779.4L1415.7 779.2L1419.1 779.3L1421.0 776.0L1422.9 779.3L1424.7 779.7L1427.7 779.2L1430.7 779.1L1433.7 779.5L1436.7 779.1L1439.7 778.9L1442.7 779.6L1445.7 779.2L1448.7 779.6L1451.7 779.2L1454.7 779.6L1457.7 779.3L1460.7 779.0L1463.7 778.9L1466.7 779.3L1469.5 779.3L1469.5 783.2L89.7 783.2Z" fill="#6c5a30"/>
<path d="M89.7 505.0H1469.5M89.7 575.2H1469.5M89.7 644.3H1469.5M89.7 713.5H1469.5M89.7 783.0H1469.5" stroke="rgba(255,255,255,0.17)" stroke-width="1.8" fill="none"/>
<path d="M153.9 505.0V783.0M268.5 505.0V783.0M384.8 505.0V783.0M499.4 505.0V783.0M614.0 505.0V783.0M729.0 505.0V783.0M844.8 505.0V783.0M959.4 505.0V783.0M1074.0 505.0V783.0M1189.0 505.0V783.0M1304.9 505.0V783.0M1419.5 505.0V783.0" stroke="rgba(255,255,255,0.17)" stroke-width="1.8" fill="none"/>
<path d="M89.7 772.9L92.7 772.6L95.7 773.3L98.7 772.5L101.7 773.2L104.7 772.9L107.7 772.5L110.7 773.1L113.7 772.5L116.7 773.0L119.7 772.5L122.7 772.5L125.7 773.0L128.7 773.6L131.7 772.6L134.7 772.7L137.7 773.3L140.7 773.7L143.7 773.2L146.7 773.0L149.7 773.8L152.7 772.5L155.7 773.6L158.7 772.8L161.4 773.1L164.0 765.0L166.6 773.1L167.7 772.8L170.7 773.5L173.7 772.7L176.7 773.2L179.7 773.3L182.7 772.9L185.7 773.2L188.7 772.5L191.7 772.5L194.7 772.7L197.7 773.4L200.7 773.0L203.7 772.8L206.7 773.2L209.7 773.0L212.7 772.8L215.7 773.5L218.7 773.4L221.7 772.7L224.7 773.2L227.7 773.1L230.7 773.6L233.7 773.4L236.7 772.8L238.4 773.1L241.0 768.0L243.6 773.1L245.7 773.0L248.7 773.5L251.7 772.6L254.7 773.1L257.7 772.5L260.7 773.3L263.7 773.5L266.7 773.2L269.7 773.6L270.4 773.1L273.0 763.0L275.6 773.1L278.7 773.2L281.7 773.2L284.7 773.0L287.7 773.6L290.7 773.7L291.7 773.1L294.3 590.8L296.9 773.1L298.2 773.1L300.8 765.0L303.4 773.1L305.7 773.3L308.7 773.8L311.7 773.6L314.7 772.8L317.7 772.9L320.7 773.3L323.7 772.4L326.7 773.0L329.7 772.6L332.7 772.6L335.7 772.5L338.7 773.5L341.7 772.6L342.4 773.1L345.0 768.0L347.6 773.1L350.7 773.6L353.7 772.5L356.7 773.0L359.7 773.2L362.7 773.6L365.7 773.5L368.7 773.6L371.7 772.8L374.7 773.0L377.7 772.9L380.7 773.6L383.7 773.7L386.4 773.1L389.0 768.0L391.6 773.1L392.7 772.7L395.7 772.7L398.7 773.1L401.7 773.2L404.7 772.8L407.7 772.4L410.7 773.0L413.7 772.9L416.7 773.2L419.7 773.7L422.7 773.4L425.7 773.1L428.7 773.3L431.7 773.3L434.7 772.5L437.7 773.7L440.7 773.5L443.7 773.6L444.4 773.1L447.0 769.0L449.6 773.1L452.7 773.0L455.7 772.5L458.7 773.3L461.7 772.5L464.7 772.5L467.7 772.7L470.7 772.6L473.7 772.9L476.7 772.5L479.7 772.4L482.7 772.6L485.7 772.5L488.7 772.9L491.7 772.4L494.7 773.6L497.7 773.3L500.7 772.6L503.7 772.8L506.7 772.9L509.7 772.9L512.7 772.6L515.7 773.6L518.7 773.8L521.7 773.1L524.7 773.1L527.7 772.5L530.7 772.5L533.2 773.1L535.8 751.0L538.4 773.1L539.7 773.6L542.7 772.6L545.7 772.4L548.7 773.7L551.7 773.1L554.7 772.6L557.7 773.2L560.7 772.4L563.7 773.1L566.7 773.8L569.7 773.6L572.7 773.4L575.7 772.8L578.7 772.9L581.7 772.6L584.7 773.5L587.7 773.1L590.7 773.5L593.7 772.9L596.7 772.7L599.7 773.5L602.7 773.8L605.7 773.6L608.7 773.5L611.7 773.5L614.7 773.4L617.7 772.7L620.7 773.1L623.7 772.9L626.7 772.4L629.2 773.1L631.8 666.5L634.4 773.1L635.7 772.8L638.7 773.4L641.7 773.7L644.7 773.0L648.2 773.1L650.8 759.6L653.4 773.1L656.7 772.9L659.7 772.7L662.7 772.7L665.7 772.7L668.7 772.7L671.7 773.3L674.7 773.7L677.7 773.6L680.7 773.1L683.7 773.3L686.7 773.5L689.7 772.5L692.7 773.3L695.7 773.7L698.7 773.5L701.7 773.5L704.7 773.1L707.7 772.6L710.7 773.5L713.7 772.9L716.7 773.5L719.7 773.8L722.7 773.0L725.7 773.0L728.7 773.7L731.7 773.4L734.7 772.6L737.7 772.6L740.7 772.6L743.7 773.7L746.7 773.5L749.7 772.6L752.7 773.6L755.7 773.8L758.7 773.3L761.7 772.9L764.7 773.2L767.7 772.6L770.7 772.4L773.7 773.8L776.7 773.3L779.7 773.1L782.7 773.7L785.7 773.0L787.4 773.1L790.0 770.0L792.6 773.1L794.7 772.7L797.7 772.8L800.7 772.8L803.7 772.7L806.7 773.2L809.7 772.8L812.7 773.0L815.7 772.6L818.7 773.7L821.7 772.9L824.7 773.0L827.7 773.2L830.2 773.1L832.8 742.0L835.4 773.1L836.7 773.7L839.7 773.1L842.7 773.1L845.7 773.1L848.7 772.4L851.7 773.0L854.7 772.7L857.7 772.4L860.7 773.5L863.7 772.6L866.7 773.1L869.7 773.4L872.7 773.2L875.7 772.9L878.7 773.1L881.7 773.2L884.7 773.5L887.7 772.5L890.7 773.2L893.7 772.7L896.7 772.8L899.7 771.6L902.7 771.2L905.7 771.3L908.7 771.6L911.7 771.8L914.7 771.1L917.7 771.4L920.7 771.2L923.7 771.2L926.7 771.5L929.7 771.1L932.7 771.2L935.7 771.2L938.7 771.8L941.7 773.4L944.7 773.6L947.7 773.7L950.7 772.8L953.7 773.2L956.7 773.7L959.7 773.6L962.7 772.6L965.7 772.6L968.7 773.0L971.7 772.5L974.7 772.7L977.7 772.5L980.7 773.3L983.7 773.5L986.7 773.7L989.7 772.6L992.7 773.4L995.7 773.3L998.7 772.6L1001.7 773.6L1004.7 773.8L1007.7 772.7L1010.7 773.7L1013.7 773.0L1016.7 773.1L1019.7 773.8L1022.7 773.6L1025.7 772.6L1028.7 773.0L1031.7 773.1L1034.7 772.9L1037.7 772.7L1040.7 772.8L1043.7 773.4L1046.7 772.4L1049.7 773.2L1052.7 773.0L1055.7 772.4L1058.7 772.9L1061.7 773.3L1064.7 773.1L1067.7 772.5L1069.8 773.1L1072.4 716.0L1075.0 773.1L1076.7 773.8L1079.7 772.5L1082.7 772.8L1085.7 772.5L1088.7 773.5L1091.7 772.8L1094.7 772.6L1097.7 773.0L1100.7 773.7L1103.7 773.5L1106.7 772.8L1109.7 772.6L1112.7 773.7L1115.7 773.2L1117.4 773.1L1120.0 771.0L1122.6 773.1L1124.7 772.5L1127.7 773.4L1130.7 773.0L1133.7 772.5L1136.7 773.7L1139.7 773.3L1142.7 773.5L1145.7 772.5L1148.7 773.6L1151.7 772.5L1154.7 773.6L1157.7 773.0L1160.7 772.9L1163.7 773.2L1166.7 773.7L1169.7 772.8L1172.7 772.6L1175.7 773.1L1178.7 772.7L1181.7 772.6L1184.7 772.6L1187.7 772.5L1188.4 773.1L1191.0 614.0L1193.6 773.1L1196.7 772.8L1199.7 773.5L1202.7 772.8L1205.7 773.1L1208.7 772.6L1211.7 772.9L1214.7 772.4L1217.7 772.8L1220.7 772.4L1223.7 773.4L1226.7 773.2L1229.7 772.7L1232.7 773.1L1235.7 773.7L1238.7 772.5L1241.7 773.5L1244.7 773.0L1247.7 773.1L1250.7 773.6L1253.7 773.0L1256.7 773.1L1259.7 773.4L1262.7 773.8L1265.7 772.9L1268.7 773.6L1271.7 773.4L1274.7 773.3L1276.4 773.1L1279.0 606.5L1281.6 773.1L1284.1 773.1L1286.7 752.6L1289.3 773.1L1292.7 773.4L1295.7 772.8L1298.7 772.6L1301.7 772.5L1304.7 773.6L1307.7 773.6L1310.7 773.3L1313.7 772.8L1316.7 772.7L1319.7 772.8L1323.0 773.1L1325.6 733.5L1327.9 773.1L1330.5 761.7L1333.1 773.1L1334.7 773.7L1337.7 773.8L1340.7 773.2L1343.7 773.1L1346.3 716.0L1348.9 773.1L1349.7 772.8L1352.7 772.9L1355.2 773.1L1357.8 730.6L1360.4 773.1L1361.7 773.1L1364.7 773.1L1367.7 772.7L1370.7 773.1L1373.7 772.4L1376.7 772.8L1379.7 772.5L1382.7 773.0L1385.7 772.5L1388.7 772.4L1391.7 772.8L1394.7 772.7L1397.7 773.2L1400.7 773.1L1403.7 773.5L1406.7 773.3L1409.0 773.1L1411.6 764.6L1414.2 773.1L1415.7 772.9L1418.4 773.1L1421.0 754.6L1423.6 773.1L1424.7 772.6L1427.7 773.4L1430.7 773.3L1433.7 772.5L1436.7 773.6L1439.7 773.6L1442.7 773.3L1445.7 773.4L1448.7 773.5L1451.7 772.6L1454.7 773.1L1457.7 773.1L1460.7 773.6L1463.7 773.5L1466.7 773.6L1469.5 773.1" stroke="#803873" stroke-width="1.6" fill="none" stroke-linejoin="round"/>
<path d="M89.7 779.4L92.7 779.6L95.7 779.4L98.7 779.5L101.7 779.1L104.7 778.9L107.7 779.0L110.7 779.2L113.7 779.0L116.7 779.6L119.7 779.3L122.7 779.4L125.7 779.4L128.7 779.4L131.7 779.3L134.7 778.9L137.7 779.5L140.7 779.5L143.7 779.3L146.7 779.3L149.7 779.4L152.7 779.0L155.7 779.5L158.7 779.1L162.1 779.3L164.0 777.0L165.9 779.3L167.7 779.5L170.7 779.1L173.7 779.5L176.7 779.7L179.7 779.3L182.7 779.2L185.7 779.3L188.7 779.4L191.7 779.5L194.7 779.4L197.7 779.4L200.7 779.0L203.7 779.0L206.7 779.1L209.7 779.5L212.7 779.1L215.7 779.4L218.7 778.9L221.7 778.9L224.7 779.1L227.7 779.4L230.7 779.5L233.7 779.4L236.7 779.1L239.7 779.3L242.7 779.3L245.7 779.3L248.7 779.0L251.7 779.6L254.7 779.1L257.7 779.7L260.7 779.6L263.7 778.9L266.7 779.3L269.7 779.6L272.7 779.7L275.7 779.3L278.7 779.1L281.7 779.1L284.7 779.7L287.7 779.1L290.7 779.4L292.4 779.3L294.3 746.0L296.2 779.3L299.7 779.7L302.7 779.0L305.7 779.6L308.7 779.3L311.7 779.6L314.7 779.5L317.7 779.1L320.7 779.6L323.7 779.3L326.7 778.9L329.7 778.9L332.7 779.3L335.7 779.3L338.7 779.1L341.7 779.0L344.7 779.2L347.7 779.2L350.7 779.6L353.7 778.9L356.7 779.5L359.7 779.6L362.7 779.0L365.7 779.6L368.7 779.5L371.7 779.6L374.7 779.1L377.7 779.2L380.7 779.2L383.7 779.7L386.7 779.4L389.7 779.2L392.7 779.2L395.7 779.1L398.7 778.9L401.7 779.0L404.7 779.6L407.7 779.1L410.7 779.6L413.7 779.1L416.7 779.1L419.7 779.3L422.7 779.1L425.7 779.2L428.7 779.7L431.7 779.6L434.7 779.5L437.7 779.4L440.7 779.6L443.7 779.7L446.7 779.3L449.7 779.5L452.7 778.9L455.7 779.5L458.7 779.3L461.7 779.5L464.7 779.4L467.7 779.1L470.7 778.9L473.7 779.6L476.7 779.0L479.7 779.3L482.7 779.2L485.7 779.1L488.7 779.5L491.7 779.7L494.7 779.1L497.7 779.4L500.7 779.1L503.7 779.3L506.7 779.2L509.7 779.0L512.7 779.0L515.7 779.1L518.7 779.6L521.7 779.3L524.7 779.1L527.7 779.6L530.7 779.7L533.9 779.3L535.8 775.0L537.7 779.3L539.7 779.1L542.7 779.0L545.7 779.2L548.7 779.0L551.7 779.1L554.7 779.1L557.7 779.4L560.7 779.6L563.7 779.5L566.7 779.2L569.7 779.2L572.7 779.3L575.7 779.2L578.7 779.2L581.7 778.9L584.7 779.1L587.7 779.7L590.7 779.0L593.7 779.3L596.7 779.4L599.7 779.6L602.7 779.1L605.7 779.1L608.7 779.1L611.7 779.2L614.7 779.3L617.7 779.7L620.7 779.6L623.7 779.6L626.7 778.9L629.9 779.3L631.8 770.0L633.7 779.3L635.7 779.6L638.7 779.3L641.7 779.4L644.7 778.9L647.7 779.2L650.7 779.6L653.7 779.6L656.7 779.6L659.7 779.7L662.7 779.1L665.7 779.0L668.7 779.0L671.7 779.3L674.7 779.4L677.7 779.7L680.7 779.5L683.7 779.4L686.7 779.5L689.7 779.3L692.7 779.3L695.7 778.9L698.7 779.5L701.7 779.1L704.7 779.6L707.7 779.4L710.7 779.1L713.7 779.0L716.7 779.1L719.7 779.4L722.7 779.5L725.7 779.0L728.7 779.0L731.7 779.3L734.7 779.4L737.7 779.2L740.7 779.1L743.7 779.4L746.7 778.9L749.7 779.1L752.7 779.3L755.7 779.7L758.7 779.4L761.7 779.6L764.7 779.3L767.7 779.1L770.7 779.1L773.7 779.7L776.7 779.5L779.7 779.1L782.7 778.9L785.7 779.3L788.7 779.4L791.7 779.2L794.7 779.1L797.7 779.4L800.7 779.6L803.7 779.1L806.7 778.9L809.7 779.2L812.7 779.2L815.7 779.4L818.7 779.1L821.7 779.5L824.7 779.5L827.7 779.3L830.9 779.3L832.8 773.0L834.7 779.3L836.7 779.1L839.7 779.6L842.7 779.1L845.7 779.1L848.7 779.5L851.7 779.1L854.7 779.7L857.7 779.3L860.7 779.0L863.7 779.1L866.7 779.2L869.7 779.4L872.7 779.7L875.7 779.0L878.7 779.2L881.7 779.1L884.7 779.7L887.7 779.0L890.7 778.9L893.7 778.9L896.7 779.2L899.7 779.6L902.7 779.6L905.7 779.5L908.7 779.7L911.7 779.6L914.7 779.2L917.7 779.0L920.7 779.6L923.7 779.5L926.7 778.9L929.7 779.4L932.7 779.2L935.7 779.2L938.7 779.2L941.7 779.0L944.7 778.9L947.7 779.1L950.7 779.2L953.7 779.7L956.7 779.0L959.7 779.7L962.7 779.1L965.7 779.2L968.7 779.6L971.7 779.6L974.7 779.2L977.7 778.9L980.7 779.3L983.7 779.2L986.7 779.6L989.7 779.1L992.7 779.2L995.7 779.6L998.7 778.9L1001.7 779.2L1004.7 779.5L1007.7 779.5L1010.7 778.9L1013.7 778.9L1016.7 779.0L1019.7 779.6L1022.7 779.1L1025.7 779.5L1028.7 779.6L1031.7 779.2L1034.7 779.1L1037.7 779.7L1040.7 779.4L1043.7 779.1L1046.7 779.5L1049.7 779.2L1052.7 779.1L1055.7 778.9L1058.7 779.5L1061.7 779.6L1064.7 779.4L1067.7 779.7L1070.5 779.3L1072.4 765.0L1074.3 779.3L1076.7 779.3L1079.7 779.7L1082.7 779.7L1085.7 779.2L1088.7 779.1L1091.7 779.2L1094.7 779.3L1097.7 779.6L1100.7 779.0L1103.7 779.5L1106.7 779.5L1109.7 779.6L1112.7 779.5L1115.7 779.4L1118.7 779.2L1121.7 779.2L1124.7 779.2L1127.7 779.5L1130.7 779.0L1133.7 779.1L1136.7 779.5L1139.7 779.1L1142.7 779.0L1145.7 778.9L1148.7 779.3L1151.7 779.2L1154.7 779.7L1157.7 779.6L1160.7 779.7L1163.7 779.1L1166.7 779.0L1169.7 779.0L1172.7 779.3L1175.7 779.5L1178.7 779.3L1181.7 779.1L1184.7 779.2L1187.7 779.4L1189.1 779.3L1191.0 760.0L1192.9 779.3L1193.7 779.5L1196.7 779.6L1199.7 779.4L1202.7 779.0L1205.7 779.6L1208.7 779.1L1211.7 779.4L1214.7 779.2L1217.7 779.5L1220.7 779.1L1223.7 779.1L1226.7 779.1L1229.7 779.0L1232.7 779.6L1235.7 779.4L1238.7 779.2L1241.7 779.2L1244.7 779.7L1247.7 779.3L1250.7 779.1L1253.7 779.5L1256.7 779.4L1259.7 779.7L1262.7 779.0L1265.7 779.3L1268.7 779.6L1271.7 779.6L1274.7 779.6L1277.1 779.3L1279.0 725.0L1280.9 779.3L1283.7 779.0L1284.8 779.3L1286.7 775.0L1288.6 779.3L1289.7 779.7L1292.7 779.4L1295.7 779.6L1298.7 779.2L1301.7 779.6L1304.7 779.3L1307.7 779.1L1310.7 779.5L1313.7 779.7L1316.7 779.0L1319.7 779.4L1322.7 779.4L1323.7 779.3L1325.6 768.0L1327.5 779.3L1328.7 779.2L1331.7 779.0L1334.7 779.1L1337.7 779.1L1340.7 779.4L1343.7 779.4L1344.4 779.3L1346.3 765.0L1348.2 779.3L1349.7 778.9L1352.7 779.2L1355.9 779.3L1357.8 770.0L1359.7 779.3L1361.7 779.1L1364.7 779.1L1367.7 779.5L1370.7 779.3L1373.7 779.0L1376.7 779.0L1379.7 779.2L1382.7 779.3L1385.7 779.4L1388.7 779.0L1391.7 779.0L1394.7 779.5L1397.7 779.2L1400.7 779.1L1403.7 779.1L1406.7 779.7L1409.7 779.1L1412.7 779.4L1415.7 779.2L1419.1 779.3L1421.0 776.0L1422.9 779.3L1424.7 779.7L1427.7 779.2L1430.7 779.1L1433.7 779.5L1436.7 779.1L1439.7 778.9L1442.7 779.6L1445.7 779.2L1448.7 779.6L1451.7 779.2L1454.7 779.6L1457.7 779.3L1460.7 779.0L1463.7 778.9L1466.7 779.3L1469.5 779.3" stroke="#d6aa3e" stroke-width="1.5" fill="none" stroke-linejoin="round"/>
<path d="M89.7 505H97.7M101.7 505H115.7M118.7 505H126.7M128.7 505H150.7M153.7 505H183.7M185.7 505H245.7M247.7 505H261.7M263.7 505H307.7M311.7 505H329.7M331.7 505H361.7M363.7 505H381.7M383.7 505H427.7M430.7 505H444.7M448.7 505H462.7M464.7 505H472.7M474.7 505H534.7M538.7 505H598.7M600.7 505H618.7M622.7 505H644.7M646.7 505H660.7M664.7 505H724.7M726.7 505H770.7M773.7 505H787.7M789.7 505H811.7M813.7 505H827.7M829.7 505H837.7M840.7 505H854.7M858.7 505H918.7M922.7 505H982.7M985.7 505H993.7M997.7 505H1027.7M1029.7 505H1073.7M1077.7 505H1085.7M1088.7 505H1132.7M1136.7 505H1158.7M1160.7 505H1174.7M1178.7 505H1222.7M1224.7 505H1268.7M1272.7 505H1290.7M1292.7 505H1310.7M1314.7 505H1358.7M1360.7 505H1374.7M1376.7 505H1406.7M1410.7 505H1440.7M1442.7 505H1460.7M1464.7 505H1469.5" stroke="#a3bd88" stroke-width="2"/>
<text x="27.07" y="511.7" font-size="22.8" stroke="#ccccdc" stroke-width="0.3" textLength="53.40" lengthAdjust="spacingAndGlyphs" fill="#ccccdc">100%</text>
<text x="40.23" y="581.0" font-size="22.8" stroke="#ccccdc" stroke-width="0.3" textLength="41.02" lengthAdjust="spacingAndGlyphs" fill="#ccccdc">75%</text>
<text x="40.04" y="650.4" font-size="22.8" stroke="#ccccdc" stroke-width="0.3" textLength="40.93" lengthAdjust="spacingAndGlyphs" fill="#ccccdc">50%</text>
<text x="39.62" y="719.7" font-size="22.8" stroke="#ccccdc" stroke-width="0.3" textLength="41.42" lengthAdjust="spacingAndGlyphs" fill="#ccccdc">25%</text>
<text x="50.97" y="789.1" font-size="22.8" stroke="#ccccdc" stroke-width="0.3" textLength="29.04" lengthAdjust="spacingAndGlyphs" fill="#ccccdc">0%</text>
<text x="154.6" y="814.8" font-size="22.8" text-anchor="middle" textLength="54.6" lengthAdjust="spacingAndGlyphs" fill="#ccccdc" stroke="#ccccdc" stroke-width="0.3">14:00</text>
<text x="269.2" y="814.8" font-size="22.8" text-anchor="middle" textLength="54.6" lengthAdjust="spacingAndGlyphs" fill="#ccccdc" stroke="#ccccdc" stroke-width="0.3">16:00</text>
<text x="385.5" y="814.8" font-size="22.8" text-anchor="middle" textLength="54.6" lengthAdjust="spacingAndGlyphs" fill="#ccccdc" stroke="#ccccdc" stroke-width="0.3">18:00</text>
<text x="500.1" y="814.8" font-size="22.8" text-anchor="middle" textLength="54.6" lengthAdjust="spacingAndGlyphs" fill="#ccccdc" stroke="#ccccdc" stroke-width="0.3">20:00</text>
<text x="614.7" y="814.8" font-size="22.8" text-anchor="middle" textLength="54.6" lengthAdjust="spacingAndGlyphs" fill="#ccccdc" stroke="#ccccdc" stroke-width="0.3">22:00</text>
<text x="729.7" y="814.8" font-size="22.8" text-anchor="middle" textLength="54.6" lengthAdjust="spacingAndGlyphs" fill="#ccccdc" stroke="#ccccdc" stroke-width="0.3">00:00</text>
<text x="845.5" y="814.8" font-size="22.8" text-anchor="middle" textLength="54.6" lengthAdjust="spacingAndGlyphs" fill="#ccccdc" stroke="#ccccdc" stroke-width="0.3">02:00</text>
<text x="960.1" y="814.8" font-size="22.8" text-anchor="middle" textLength="54.6" lengthAdjust="spacingAndGlyphs" fill="#ccccdc" stroke="#ccccdc" stroke-width="0.3">04:00</text>
<text x="1074.7" y="814.8" font-size="22.8" text-anchor="middle" textLength="54.6" lengthAdjust="spacingAndGlyphs" fill="#ccccdc" stroke="#ccccdc" stroke-width="0.3">06:00</text>
<text x="1189.7" y="814.8" font-size="22.8" text-anchor="middle" textLength="54.6" lengthAdjust="spacingAndGlyphs" fill="#ccccdc" stroke="#ccccdc" stroke-width="0.3">08:00</text>
<text x="1305.6" y="814.8" font-size="22.8" text-anchor="middle" textLength="54.6" lengthAdjust="spacingAndGlyphs" fill="#ccccdc" stroke="#ccccdc" stroke-width="0.3">10:00</text>
<text x="1420.2" y="814.8" font-size="22.8" text-anchor="middle" textLength="54.6" lengthAdjust="spacingAndGlyphs" fill="#ccccdc" stroke="#ccccdc" stroke-width="0.3">12:00</text>
<rect x="44.3" y="849.3" width="25.4" height="7.3" rx="1.8" fill="#eab839"/>
<text x="82.20" y="859.1" font-size="22.8" stroke="#ccccdc" stroke-width="0.3" textLength="130.36" lengthAdjust="spacingAndGlyphs" fill="#ccccdc">Busy System</text>
<rect x="230.4" y="849.3" width="25.4" height="7.3" rx="1.8" fill="#0a437c"/>
<text x="269.08" y="859.1" font-size="22.8" stroke="#ccccdc" stroke-width="0.3" textLength="99.76" lengthAdjust="spacingAndGlyphs" fill="#ccccdc">Busy User</text>
<rect x="388.9" y="849.3" width="25.4" height="7.3" rx="1.8" fill="#890f02"/>
<text x="425.91" y="859.1" font-size="22.8" stroke="#ccccdc" stroke-width="0.3" textLength="115.51" lengthAdjust="spacingAndGlyphs" fill="#ccccdc">Busy Iowait</text>
<rect x="561.4" y="849.3" width="25.4" height="7.3" rx="1.8" fill="#ef843c"/>
<text x="599.14" y="859.1" font-size="22.8" stroke="#ccccdc" stroke-width="0.3" textLength="102.02" lengthAdjust="spacingAndGlyphs" fill="#ccccdc">Busy IRQs</text>
<rect x="719.5" y="849.3" width="25.4" height="7.3" rx="1.8" fill="#6d1f62"/>
<text x="757.08" y="859.1" font-size="22.8" stroke="#ccccdc" stroke-width="0.3" textLength="110.34" lengthAdjust="spacingAndGlyphs" fill="#ccccdc">Busy Other</text>
<rect x="886.2" y="849.3" width="25.4" height="7.3" rx="1.8" fill="#7eb26d"/>
<text x="924.37" y="859.1" font-size="22.8" stroke="#ccccdc" stroke-width="0.3" textLength="38.57" lengthAdjust="spacingAndGlyphs" fill="#ccccdc">Idle</text>
<rect x="1529.9" y="415.6" width="1501.4" height="467.3" rx="3.6" fill="#1a1c21" stroke="#202227" stroke-width="1.8"/>
<path d="M1530.5 416.2h57l-57 57z" fill="url(#cg)"/>
<path d="M1542.5 424.7h4.4v3.5h-4.4zM1540.6 430.6h6.4v6.6h1.3v2.7h-7.7v-2.7h1.8v-3.9h-1.8z" fill="#a6a8b2"/>
<text x="2197.41" y="453.8" font-size="26.6" font-weight="bold" textLength="165.76" lengthAdjust="spacingAndGlyphs" fill="#ccccdc">Memory Basic</text>
<rect x="1637.1" y="558" width="1351.6" height="224.7" fill="#465a3e"/>
<path d="M1637.1 580.5L1706.0 580.2L1710.0 575.5L1812.0 573.6L1816.0 570.0L1821.0 572.5L1832.0 573.0L1834.0 569.0L1836.5 588.0L1840.0 588.5L1842.7 577.6L1845.0 583.8L1886.0 581.7L1890.0 580.5L1908.0 580.5L1912.0 583.8L2070.0 581.7L2074.0 578.4L2164.5 576.7L2166.5 607.8L2169.0 594.5L2185.0 593.5L2187.0 585.8L2280.0 583.0L2319.0 582.6L2323.0 579.6L2595.0 576.7L2597.7 568.5L2600.0 572.6L2712.5 570.5L2715.0 588.7L2799.0 585.8L2801.5 571.4L2805.0 579.6L2845.0 575.5L2848.0 568.5L2851.0 574.3L2864.0 574.5L2867.0 579.6L2912.0 580.5L2916.0 583.8L2930.0 583.8L2944.0 574.7L2988.7 573.4L2988.7 782.7L1637.1 782.7Z" fill="#162134"/>
<path d="M1637.1 650.8L1706.0 650.8L1710.0 648.7L1814.0 648.4L1818.0 645.8L1822.0 648.2L1833.0 649.0L1835.3 635.5L1838.0 654.0L1840.5 652.0L1842.7 643.0L1845.0 650.0L1886.0 650.0L1890.0 648.0L1894.0 649.5L1898.0 647.5L1902.0 649.0L1906.0 648.0L1912.0 652.0L2072.0 652.0L2165.0 652.4L2167.5 668.6L2170.0 655.0L2180.0 654.0L2186.0 652.9L2280.0 652.0L2319.0 652.0L2323.0 650.8L2595.0 650.6L2597.7 646.7L2600.0 651.0L2712.0 650.6L2714.0 646.0L2716.0 650.6L2799.0 650.0L2801.3 638.4L2804.0 643.8L2912.0 643.4L2916.0 650.0L2938.0 650.0L2942.0 648.7L2988.7 648.7L2988.7 782.7L1637.1 782.7Z" fill="#6c5a30"/>
<path d="M1637.1 506.3H2988.7M1637.1 561.3H2988.7M1637.1 615.3H2988.7M1637.1 671.6H2988.7M1637.1 726.1H2988.7M1637.1 782.7H2988.7" stroke="rgba(255,255,255,0.17)" stroke-width="1.8" fill="none"/>
<path d="M1699.6 506.3V782.7M1812.1 506.3V782.7M1925.0 506.3V782.7M2038.0 506.3V782.7M2150.5 506.3V782.7M2263.5 506.3V782.7M2376.4 506.3V782.7M2489.4 506.3V782.7M2602.3 506.3V782.7M2714.8 506.3V782.7M2827.8 506.3V782.7M2939.1 506.3V782.7" stroke="rgba(255,255,255,0.17)" stroke-width="1.8" fill="none"/>
<path d="M1637.1 580.5L1706.0 580.2L1710.0 575.5L1812.0 573.6L1816.0 570.0L1821.0 572.5L1832.0 573.0L1834.0 569.0L1836.5 588.0L1840.0 588.5L1842.7 577.6L1845.0 583.8L1886.0 581.7L1890.0 580.5L1908.0 580.5L1912.0 583.8L2070.0 581.7L2074.0 578.4L2164.5 576.7L2166.5 607.8L2169.0 594.5L2185.0 593.5L2187.0 585.8L2280.0 583.0L2319.0 582.6L2323.0 579.6L2595.0 576.7L2597.7 568.5L2600.0 572.6L2712.5 570.5L2715.0 588.7L2799.0 585.8L2801.5 571.4L2805.0 579.6L2845.0 575.5L2848.0 568.5L2851.0 574.3L2864.0 574.5L2867.0 579.6L2912.0 580.5L2916.0 583.8L2930.0 583.8L2944.0 574.7L2988.7 573.4" stroke="#13294a" stroke-width="1.6" fill="none" stroke-linejoin="round"/>
<path d="M1637.1 650.8L1706.0 650.8L1710.0 648.7L1814.0 648.4L1818.0 645.8L1822.0 648.2L1833.0 649.0L1835.3 635.5L1838.0 654.0L1840.5 652.0L1842.7 643.0L1845.0 650.0L1886.0 650.0L1890.0 648.0L1894.0 649.5L1898.0 647.5L1902.0 649.0L1906.0 648.0L1912.0 652.0L2072.0 652.0L2165.0 652.4L2167.5 668.6L2170.0 655.0L2180.0 654.0L2186.0 652.9L2280.0 652.0L2319.0 652.0L2323.0 650.8L2595.0 650.6L2597.7 646.7L2600.0 651.0L2712.0 650.6L2714.0 646.0L2716.0 650.6L2799.0 650.0L2801.3 638.4L2804.0 643.8L2912.0 643.4L2916.0 650.0L2938.0 650.0L2942.0 648.7L2988.7 648.7" stroke="#cfa53e" stroke-width="1.5" fill="none" stroke-linejoin="round"/>
<path d="M1637.1 560.8H2988.7" stroke="#6f9a60" stroke-width="1.4"/>
<path d="M1637.1 558H2988.7" stroke="#c25a34" stroke-width="2.5"/>
<text x="1545.41" y="511.7" font-size="22.8" stroke="#ccccdc" stroke-width="0.3" textLength="82.65" lengthAdjust="spacingAndGlyphs" fill="#ccccdc">2.33 GiB</text>
<text x="1546.11" y="568.1" font-size="22.8" stroke="#ccccdc" stroke-width="0.3" textLength="82.12" lengthAdjust="spacingAndGlyphs" fill="#ccccdc">1.86 GiB</text>
<text x="1546.11" y="623.4" font-size="22.8" stroke="#ccccdc" stroke-width="0.3" textLength="82.12" lengthAdjust="spacingAndGlyphs" fill="#ccccdc">1.40 GiB</text>
<text x="1547.64" y="678.7" font-size="22.8" stroke="#ccccdc" stroke-width="0.3" textLength="80.53" lengthAdjust="spacingAndGlyphs" fill="#ccccdc">954 MiB</text>
<text x="1547.66" y="734.0" font-size="22.8" stroke="#ccccdc" stroke-width="0.3" textLength="80.41" lengthAdjust="spacingAndGlyphs" fill="#ccccdc">477 MiB</text>
<text x="1595.96" y="789.3" font-size="22.8" stroke="#ccccdc" stroke-width="0.3" textLength="32.77" lengthAdjust="spacingAndGlyphs" fill="#ccccdc">0 B</text>
<text x="1700.3" y="814.8" font-size="22.8" text-anchor="middle" textLength="54.6" lengthAdjust="spacingAndGlyphs" fill="#ccccdc" stroke="#ccccdc" stroke-width="0.3">14:00</text>
<text x="1812.8" y="814.8" font-size="22.8" text-anchor="middle" textLength="54.6" lengthAdjust="spacingAndGlyphs" fill="#ccccdc" stroke="#ccccdc" stroke-width="0.3">16:00</text>
<text x="1925.7" y="814.8" font-size="22.8" text-anchor="middle" textLength="54.6" lengthAdjust="spacingAndGlyphs" fill="#ccccdc" stroke="#ccccdc" stroke-width="0.3">18:00</text>
<text x="2038.7" y="814.8" font-size="22.8" text-anchor="middle" textLength="54.6" lengthAdjust="spacingAndGlyphs" fill="#ccccdc" stroke="#ccccdc" stroke-width="0.3">20:00</text>
<text x="2151.2" y="814.8" font-size="22.8" text-anchor="middle" textLength="54.6" lengthAdjust="spacingAndGlyphs" fill="#ccccdc" stroke="#ccccdc" stroke-width="0.3">22:00</text>
<text x="2264.2" y="814.8" font-size="22.8" text-anchor="middle" textLength="54.6" lengthAdjust="spacingAndGlyphs" fill="#ccccdc" stroke="#ccccdc" stroke-width="0.3">00:00</text>
<text x="2377.1" y="814.8" font-size="22.8" text-anchor="middle" textLength="54.6" lengthAdjust="spacingAndGlyphs" fill="#ccccdc" stroke="#ccccdc" stroke-width="0.3">02:00</text>
<text x="2490.1" y="814.8" font-size="22.8" text-anchor="middle" textLength="54.6" lengthAdjust="spacingAndGlyphs" fill="#ccccdc" stroke="#ccccdc" stroke-width="0.3">04:00</text>
<text x="2603.0" y="814.8" font-size="22.8" text-anchor="middle" textLength="54.6" lengthAdjust="spacingAndGlyphs" fill="#ccccdc" stroke="#ccccdc" stroke-width="0.3">06:00</text>
<text x="2715.5" y="814.8" font-size="22.8" text-anchor="middle" textLength="54.6" lengthAdjust="spacingAndGlyphs" fill="#ccccdc" stroke="#ccccdc" stroke-width="0.3">08:00</text>
<text x="2828.5" y="814.8" font-size="22.8" text-anchor="middle" textLength="54.6" lengthAdjust="spacingAndGlyphs" fill="#ccccdc" stroke="#ccccdc" stroke-width="0.3">10:00</text>
<text x="2939.8" y="814.8" font-size="22.8" text-anchor="middle" textLength="54.6" lengthAdjust="spacingAndGlyphs" fill="#ccccdc" stroke="#ccccdc" stroke-width="0.3">12:00</text>
<rect x="1562.2" y="849.3" width="25.4" height="7.3" rx="1.8" fill="#e0f9d7"/>
<text x="1601.09" y="859.1" font-size="22.8" stroke="#ccccdc" stroke-width="0.3" textLength="104.40" lengthAdjust="spacingAndGlyphs" fill="#ccccdc">RAM Total</text>
<rect x="1722.7" y="849.3" width="25.4" height="7.3" rx="1.8" fill="#eab839"/>
<text x="1762.25" y="859.1" font-size="22.8" stroke="#ccccdc" stroke-width="0.3" textLength="104.99" lengthAdjust="spacingAndGlyphs" fill="#ccccdc">RAM Used</text>
<rect x="1886.0" y="849.3" width="25.4" height="7.3" rx="1.8" fill="#0c2f5e"/>
<text x="1923.48" y="859.1" font-size="22.8" stroke="#ccccdc" stroke-width="0.3" textLength="201.86" lengthAdjust="spacingAndGlyphs" fill="#ccccdc">RAM Cache + Buffer</text>
<rect x="2143.5" y="849.3" width="25.4" height="7.3" rx="1.8" fill="#7eb26d"/>
<text x="2182.20" y="859.1" font-size="22.8" stroke="#ccccdc" stroke-width="0.3" textLength="99.22" lengthAdjust="spacingAndGlyphs" fill="#ccccdc">RAM Free</text>
<rect x="2299.4" y="849.3" width="25.4" height="7.3" rx="1.8" fill="#c8402c"/>
<text x="2337.61" y="859.1" font-size="22.8" stroke="#ccccdc" stroke-width="0.3" textLength="118.59" lengthAdjust="spacingAndGlyphs" fill="#ccccdc">SWAP Used</text>
<path d="M3016.4 834V867" stroke="rgba(204,204,220,0.12)" stroke-width="1.6"/>
<rect x="10.9" y="900.1" width="1501.7" height="466.0" rx="3.6" fill="#1a1c21" stroke="#202227" stroke-width="1.8"/>
<path d="M11.5 900.7h57l-57 57z" fill="url(#cg)"/>
<path d="M23.5 909.2h4.4v3.5h-4.4zM21.6 915.1h6.4v6.6h1.3v2.7h-7.7v-2.7h1.8v-3.9h-1.8z" fill="#a6a8b2"/>
<text x="639.18" y="937.0" font-size="26.6" font-weight="bold" textLength="245.35" lengthAdjust="spacingAndGlyphs" fill="#ccccdc">Network Traffic Basic</text>
<path d="M113.0 989.3H1469.5M113.0 1058.5H1469.5M113.0 1127.7H1469.5M113.0 1196.9H1469.5M113.0 1266.1H1469.5" stroke="rgba(255,255,255,0.17)" stroke-width="1.8" fill="none"/>
<path d="M177.9 989.3V1266.1M290.4 989.3V1266.1M403.4 989.3V1266.1M516.0 989.3V1266.1M628.5 989.3V1266.1M741.4 989.3V1266.1M856.0 989.3V1266.1M968.5 989.3V1266.1M1081.5 989.3V1266.1M1194.0 989.3V1266.1M1307.0 989.3V1266.1M1419.5 989.3V1266.1" stroke="rgba(255,255,255,0.17)" stroke-width="1.8" fill="none"/>
<path d="M312.3 1196.6L314.5 1161.4L316.7 1196.6Z" fill="#7eb26d" fill-opacity="0.85" stroke="#7eb26d" stroke-width="1.2" stroke-linejoin="round"/>
<path d="M311.4 1196.6L313.8 1183.5L316.2 1196.6Z" fill="#eab839" fill-opacity="0.85" stroke="#eab839" stroke-width="1.2" stroke-linejoin="round"/>
<path d="M319.3 1196.6L321.9 1128.0L324.5 1196.6Z" fill="#7eb26d" fill-opacity="0.85" stroke="#7eb26d" stroke-width="1.2" stroke-linejoin="round"/>
<path d="M318.0 1196.6L320.2 1168.0L322.4 1196.6Z" fill="#6ed0e0" fill-opacity="0.85" stroke="#6ed0e0" stroke-width="1.2" stroke-linejoin="round"/>
<path d="M318.4 1196.6L320.6 1229.3L322.8 1196.6Z" fill="#ef843c" fill-opacity="0.85" stroke="#ef843c" stroke-width="1.2" stroke-linejoin="round"/>
<path d="M318.4 1196.6L320.6 1224.0L322.8 1196.6Z" fill="#3d78c6" fill-opacity="1" stroke="#3d78c6" stroke-width="1.2" stroke-linejoin="round"/>
<path d="M549.7 1196.6L551.5 1188.7L553.3 1196.6Z" fill="#eab839" fill-opacity="0.85" stroke="#eab839" stroke-width="1.2" stroke-linejoin="round"/>
<path d="M644.9 1196.6L646.7 1193.0L648.5 1196.6Z" fill="#7eb26d" fill-opacity="0.85" stroke="#7eb26d" stroke-width="1.2" stroke-linejoin="round"/>
<path d="M662.9 1196.6L664.9 1168.0L666.9 1196.6Z" fill="#6ed0e0" fill-opacity="0.85" stroke="#6ed0e0" stroke-width="1.2" stroke-linejoin="round"/>
<path d="M662.9 1196.6L664.9 1220.0L666.9 1196.6Z" fill="#ef843c" fill-opacity="0.85" stroke="#ef843c" stroke-width="1.2" stroke-linejoin="round"/>
<path d="M662.9 1196.6L664.9 1214.0L666.9 1196.6Z" fill="#3d78c6" fill-opacity="1" stroke="#3d78c6" stroke-width="1.2" stroke-linejoin="round"/>
<path d="M842.0 1196.6L843.6 1200.5L845.2 1196.6Z" fill="#ef843c" fill-opacity="0.85" stroke="#ef843c" stroke-width="1.2" stroke-linejoin="round"/>
<path d="M842.2 1196.6L843.6 1192.0L845.0 1196.6Z" fill="#7eb26d" fill-opacity="0.85" stroke="#7eb26d" stroke-width="1.2" stroke-linejoin="round"/>
<path d="M1075.3 1196.6L1077.3 1177.5L1079.3 1196.6Z" fill="#7eb26d" fill-opacity="0.85" stroke="#7eb26d" stroke-width="1.2" stroke-linejoin="round"/>
<path d="M1280.2 1196.6L1282.5 1025.3L1284.8 1196.6Z" fill="#7eb26d" fill-opacity="0.85" stroke="#7eb26d" stroke-width="1.2" stroke-linejoin="round"/>
<path d="M1280.8 1196.6L1283.0 1204.4L1285.2 1196.6Z" fill="#ef843c" fill-opacity="0.85" stroke="#ef843c" stroke-width="1.2" stroke-linejoin="round"/>
<path d="M1283.7 1196.6L1285.5 1187.0L1287.3 1196.6Z" fill="#eab839" fill-opacity="0.85" stroke="#eab839" stroke-width="1.2" stroke-linejoin="round"/>
<path d="M1289.2 1196.6L1291.0 1187.5L1292.8 1196.6Z" fill="#ef843c" fill-opacity="0.85" stroke="#ef843c" stroke-width="1.2" stroke-linejoin="round"/>
<path d="M1325.6 1196.6L1327.6 1180.9L1329.6 1196.6Z" fill="#7eb26d" fill-opacity="0.85" stroke="#7eb26d" stroke-width="1.2" stroke-linejoin="round"/>
<path d="M113 1195.2H1469.5" stroke="#a9a45a" stroke-width="0.9" stroke-opacity="0.8" stroke-dasharray="9 2 5 3 14 2"/>
<path d="M113 1197.2H1469.5" stroke="#4a7dbd" stroke-width="2.5"/>
<text x="31.61" y="994.7" font-size="22.8" stroke="#ccccdc" stroke-width="0.3" textLength="70.67" lengthAdjust="spacingAndGlyphs" fill="#ccccdc">6 Mb/s</text>
<text x="32.40" y="1064.4" font-size="22.8" stroke="#ccccdc" stroke-width="0.3" textLength="69.76" lengthAdjust="spacingAndGlyphs" fill="#ccccdc">4 Mb/s</text>
<text x="31.95" y="1133.4" font-size="22.8" stroke="#ccccdc" stroke-width="0.3" textLength="70.37" lengthAdjust="spacingAndGlyphs" fill="#ccccdc">2 Mb/s</text>
<text x="52.63" y="1202.9" font-size="22.8" stroke="#ccccdc" stroke-width="0.3" textLength="51.29" lengthAdjust="spacingAndGlyphs" fill="#ccccdc">0 b/s</text>
<text x="27.09" y="1272.3" font-size="22.8" stroke="#ccccdc" stroke-width="0.3" textLength="75.88" lengthAdjust="spacingAndGlyphs" fill="#ccccdc">-2 Mb/s</text>
<text x="178.6" y="1298.6" font-size="22.8" text-anchor="middle" textLength="54.6" lengthAdjust="spacingAndGlyphs" fill="#ccccdc" stroke="#ccccdc" stroke-width="0.3">14:00</text>
<text x="291.1" y="1298.6" font-size="22.8" text-anchor="middle" textLength="54.6" lengthAdjust="spacingAndGlyphs" fill="#ccccdc" stroke="#ccccdc" stroke-width="0.3">16:00</text>
<text x="404.1" y="1298.6" font-size="22.8" text-anchor="middle" textLength="54.6" lengthAdjust="spacingAndGlyphs" fill="#ccccdc" stroke="#ccccdc" stroke-width="0.3">18:00</text>
<text x="516.7" y="1298.6" font-size="22.8" text-anchor="middle" textLength="54.6" lengthAdjust="spacingAndGlyphs" fill="#ccccdc" stroke="#ccccdc" stroke-width="0.3">20:00</text>
<text x="629.2" y="1298.6" font-size="22.8" text-anchor="middle" textLength="54.6" lengthAdjust="spacingAndGlyphs" fill="#ccccdc" stroke="#ccccdc" stroke-width="0.3">22:00</text>
<text x="742.1" y="1298.6" font-size="22.8" text-anchor="middle" textLength="54.6" lengthAdjust="spacingAndGlyphs" fill="#ccccdc" stroke="#ccccdc" stroke-width="0.3">00:00</text>
<text x="856.7" y="1298.6" font-size="22.8" text-anchor="middle" textLength="54.6" lengthAdjust="spacingAndGlyphs" fill="#ccccdc" stroke="#ccccdc" stroke-width="0.3">02:00</text>
<text x="969.2" y="1298.6" font-size="22.8" text-anchor="middle" textLength="54.6" lengthAdjust="spacingAndGlyphs" fill="#ccccdc" stroke="#ccccdc" stroke-width="0.3">04:00</text>
<text x="1082.2" y="1298.6" font-size="22.8" text-anchor="middle" textLength="54.6" lengthAdjust="spacingAndGlyphs" fill="#ccccdc" stroke="#ccccdc" stroke-width="0.3">06:00</text>
<text x="1194.7" y="1298.6" font-size="22.8" text-anchor="middle" textLength="54.6" lengthAdjust="spacingAndGlyphs" fill="#ccccdc" stroke="#ccccdc" stroke-width="0.3">08:00</text>
<text x="1307.7" y="1298.6" font-size="22.8" text-anchor="middle" textLength="54.6" lengthAdjust="spacingAndGlyphs" fill="#ccccdc" stroke="#ccccdc" stroke-width="0.3">10:00</text>
<text x="1420.2" y="1298.6" font-size="22.8" text-anchor="middle" textLength="54.6" lengthAdjust="spacingAndGlyphs" fill="#ccccdc" stroke="#ccccdc" stroke-width="0.3">12:00</text>
<rect x="44.3" y="1333.2" width="25.4" height="7.3" rx="1.8" fill="#7eb26d"/>
<text x="82.09" y="1343.0" font-size="22.8" stroke="#ccccdc" stroke-width="0.3" textLength="98.09" lengthAdjust="spacingAndGlyphs" fill="#ccccdc">recv ens3</text>
<rect x="198.2" y="1333.2" width="25.4" height="7.3" rx="1.8" fill="#eab839"/>
<text x="236.48" y="1343.0" font-size="22.8" stroke="#ccccdc" stroke-width="0.3" textLength="97.51" lengthAdjust="spacingAndGlyphs" fill="#ccccdc">recv ens4</text>
<rect x="352.0" y="1333.2" width="25.4" height="7.3" rx="1.8" fill="#6ed0e0"/>
<text x="390.34" y="1343.0" font-size="22.8" stroke="#ccccdc" stroke-width="0.3" textLength="67.10" lengthAdjust="spacingAndGlyphs" fill="#ccccdc">recv lo</text>
<rect x="476.2" y="1333.2" width="25.4" height="7.3" rx="1.8" fill="#ef843c"/>
<text x="515.63" y="1343.0" font-size="22.8" stroke="#ccccdc" stroke-width="0.3" textLength="105.03" lengthAdjust="spacingAndGlyphs" fill="#ccccdc">trans ens3</text>
<rect x="638.4" y="1333.2" width="25.4" height="7.3" rx="1.8" fill="#e24d42"/>
<text x="677.87" y="1343.0" font-size="22.8" stroke="#ccccdc" stroke-width="0.3" textLength="104.73" lengthAdjust="spacingAndGlyphs" fill="#ccccdc">trans ens4</text>
<rect x="801.6" y="1333.2" width="25.4" height="7.3" rx="1.8" fill="#3a80c6"/>
<text x="840.96" y="1343.0" font-size="22.8" stroke="#ccccdc" stroke-width="0.3" textLength="74.73" lengthAdjust="spacingAndGlyphs" fill="#ccccdc">trans lo</text>
<path d="M25.7 1350.5H1497.7" stroke="rgba(204,204,220,0.12)" stroke-width="1.6"/>
<rect x="1529.9" y="900.1" width="1501.4" height="466.0" rx="3.6" fill="#1a1c21" stroke="#202227" stroke-width="1.8"/>
<path d="M1530.5 900.7h57l-57 57z" fill="url(#cg)"/>
<path d="M1542.5 909.2h4.4v3.5h-4.4zM1540.6 915.1h6.4v6.6h1.3v2.7h-7.7v-2.7h1.8v-3.9h-1.8z" fill="#a6a8b2"/>
<text x="2149.23" y="937.0" font-size="26.6" font-weight="bold" textLength="262.01" lengthAdjust="spacingAndGlyphs" fill="#ccccdc">Disk Space Used Basic</text>
<path d="M1607.8 1099.2L1810.0 1099.2L1813.0 1098.0L2586.0 1098.0L2589.0 1096.8L2592.0 1098.2L2795.5 1098.4L2798.5 1092.1L2943.5 1092.1L2946.5 1100.4L2988.7 1100.4L2988.7 1266.1L1607.8 1266.1Z" fill="#465a3e"/>
<rect x="1607.8" y="1250.4" width="1380.9" height="16.4" fill="#8a8143"/>
<path d="M1607.8 989.3H2988.7M1607.8 1058.5H2988.7M1607.8 1127.7H2988.7M1607.8 1196.9H2988.7M1607.8 1266.1H2988.7" stroke="rgba(255,255,255,0.17)" stroke-width="1.8" fill="none"/>
<path d="M1672.3 989.3V1266.1M1786.9 989.3V1266.1M1903.1 989.3V1266.1M2017.7 989.3V1266.1M2132.7 989.3V1266.1M2247.0 989.3V1266.1M2363.6 989.3V1266.1M2478.6 989.3V1266.1M2593.2 989.3V1266.1M2707.4 989.3V1266.1M2823.6 989.3V1266.1M2938.7 989.3V1266.1" stroke="rgba(255,255,255,0.17)" stroke-width="1.8" fill="none"/>
<path d="M1607.8 1099.2L1810.0 1099.2L1813.0 1098.0L2586.0 1098.0L2589.0 1096.8L2592.0 1098.2L2795.5 1098.4L2798.5 1092.1L2943.5 1092.1L2946.5 1100.4L2988.7 1100.4" stroke="#86ad6d" stroke-width="1.8" fill="none" stroke-linejoin="round"/>
<path d="M1607.8 1250.6H2988.7" stroke="#d9b140" stroke-width="2.2"/>
<path d="M1607.8 1264.8H2988.7" stroke="#9fc6bd" stroke-width="1.6"/>
<path d="M1607.8 1266.9H2988.7" stroke="#c9503f" stroke-width="1.6"/>
<circle cx="2157.6" cy="1266" r="2.2" fill="#e24d42"/>
<text x="1545.58" y="994.7" font-size="22.8" stroke="#ccccdc" stroke-width="0.3" textLength="53.02" lengthAdjust="spacingAndGlyphs" fill="#ccccdc">100%</text>
<text x="1558.21" y="1064.4" font-size="22.8" stroke="#ccccdc" stroke-width="0.3" textLength="40.61" lengthAdjust="spacingAndGlyphs" fill="#ccccdc">75%</text>
<text x="1558.04" y="1133.4" font-size="22.8" stroke="#ccccdc" stroke-width="0.3" textLength="40.81" lengthAdjust="spacingAndGlyphs" fill="#ccccdc">50%</text>
<text x="1557.71" y="1203.2" font-size="22.8" stroke="#ccccdc" stroke-width="0.3" textLength="41.37" lengthAdjust="spacingAndGlyphs" fill="#ccccdc">25%</text>
<text x="1568.92" y="1272.3" font-size="22.8" stroke="#ccccdc" stroke-width="0.3" textLength="28.72" lengthAdjust="spacingAndGlyphs" fill="#ccccdc">0%</text>
<text x="1673.0" y="1298.6" font-size="22.8" text-anchor="middle" textLength="54.6" lengthAdjust="spacingAndGlyphs" fill="#ccccdc" stroke="#ccccdc" stroke-width="0.3">14:00</text>
<text x="1787.6" y="1298.6" font-size="22.8" text-anchor="middle" textLength="54.6" lengthAdjust="spacingAndGlyphs" fill="#ccccdc" stroke="#ccccdc" stroke-width="0.3">16:00</text>
<text x="1903.8" y="1298.6" font-size="22.8" text-anchor="middle" textLength="54.6" lengthAdjust="spacingAndGlyphs" fill="#ccccdc" stroke="#ccccdc" stroke-width="0.3">18:00</text>
<text x="2018.4" y="1298.6" font-size="22.8" text-anchor="middle" textLength="54.6" lengthAdjust="spacingAndGlyphs" fill="#ccccdc" stroke="#ccccdc" stroke-width="0.3">20:00</text>
<text x="2133.4" y="1298.6" font-size="22.8" text-anchor="middle" textLength="54.6" lengthAdjust="spacingAndGlyphs" fill="#ccccdc" stroke="#ccccdc" stroke-width="0.3">22:00</text>
<text x="2247.7" y="1298.6" font-size="22.8" text-anchor="middle" textLength="54.6" lengthAdjust="spacingAndGlyphs" fill="#ccccdc" stroke="#ccccdc" stroke-width="0.3">00:00</text>
<text x="2364.3" y="1298.6" font-size="22.8" text-anchor="middle" textLength="54.6" lengthAdjust="spacingAndGlyphs" fill="#ccccdc" stroke="#ccccdc" stroke-width="0.3">02:00</text>
<text x="2479.3" y="1298.6" font-size="22.8" text-anchor="middle" textLength="54.6" lengthAdjust="spacingAndGlyphs" fill="#ccccdc" stroke="#ccccdc" stroke-width="0.3">04:00</text>
<text x="2593.9" y="1298.6" font-size="22.8" text-anchor="middle" textLength="54.6" lengthAdjust="spacingAndGlyphs" fill="#ccccdc" stroke="#ccccdc" stroke-width="0.3">06:00</text>
<text x="2708.1" y="1298.6" font-size="22.8" text-anchor="middle" textLength="54.6" lengthAdjust="spacingAndGlyphs" fill="#ccccdc" stroke="#ccccdc" stroke-width="0.3">08:00</text>
<text x="2824.3" y="1298.6" font-size="22.8" text-anchor="middle" textLength="54.6" lengthAdjust="spacingAndGlyphs" fill="#ccccdc" stroke="#ccccdc" stroke-width="0.3">10:00</text>
<text x="2939.4" y="1298.6" font-size="22.8" text-anchor="middle" textLength="54.6" lengthAdjust="spacingAndGlyphs" fill="#ccccdc" stroke="#ccccdc" stroke-width="0.3">12:00</text>
<rect x="1562.2" y="1333.2" width="25.4" height="7.3" rx="1.8" fill="#7eb26d"/>
<text x="1602.64" y="1343.0" font-size="22.8" stroke="#ccccdc" stroke-width="0.3" textLength="7.87" lengthAdjust="spacingAndGlyphs" fill="#ccccdc">/</text>
<rect x="1630.0" y="1333.2" width="25.4" height="7.3" rx="1.8" fill="#eab839"/>
<text x="1670.03" y="1343.0" font-size="22.8" stroke="#ccccdc" stroke-width="0.3" textLength="89.68" lengthAdjust="spacingAndGlyphs" fill="#ccccdc">/boot/efi</text>
<rect x="1777.3" y="1333.2" width="25.4" height="7.3" rx="1.8" fill="#6ed0e0"/>
<text x="1816.73" y="1343.0" font-size="22.8" stroke="#ccccdc" stroke-width="0.3" textLength="42.07" lengthAdjust="spacingAndGlyphs" fill="#ccccdc">/run</text>
<rect x="1876.6" y="1333.2" width="25.4" height="7.3" rx="1.8" fill="#ef843c"/>
<text x="1916.74" y="1343.0" font-size="22.8" stroke="#ccccdc" stroke-width="0.3" textLength="91.79" lengthAdjust="spacingAndGlyphs" fill="#ccccdc">/run/lock</text>
<rect x="2027.6" y="1333.2" width="25.4" height="7.3" rx="1.8" fill="#e24d42"/>
<text x="2066.72" y="1343.0" font-size="22.8" stroke="#ccccdc" stroke-width="0.3" textLength="153.49" lengthAdjust="spacingAndGlyphs" fill="#ccccdc">/run/user/1000</text>
<path d="M1545 1350.5H3016.4M3016.4 1318V1350.5" stroke="rgba(204,204,220,0.12)" stroke-width="1.6" fill="none"/>
</svg>
</body></html>
